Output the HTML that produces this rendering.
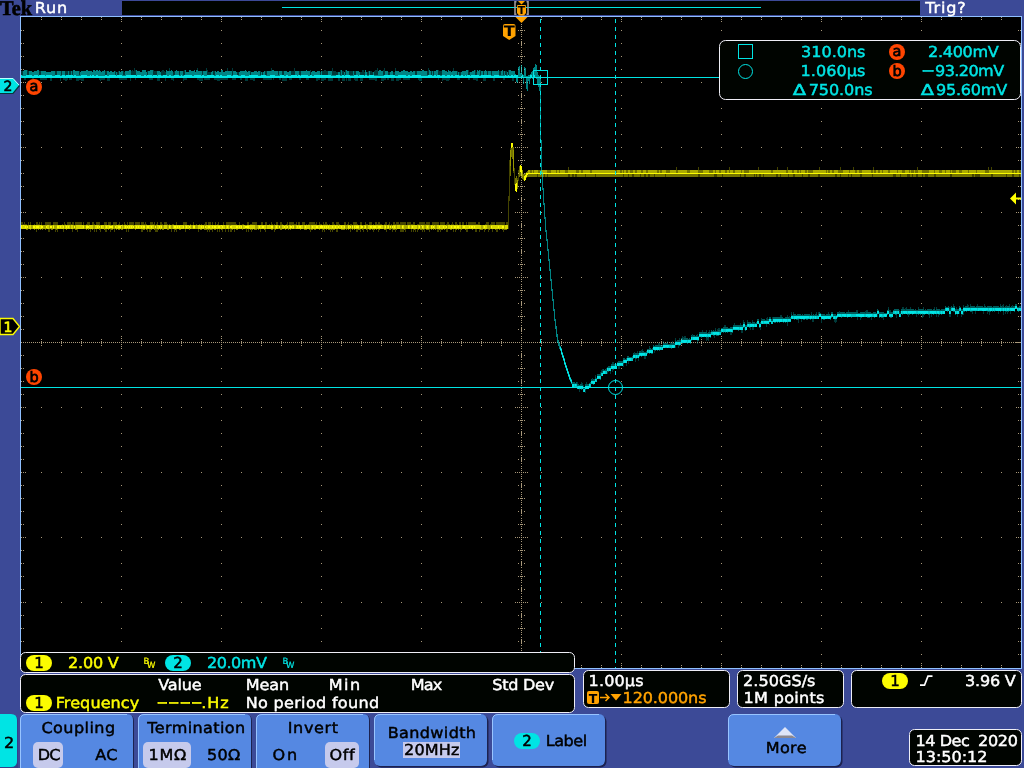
<!DOCTYPE html>
<html><head><meta charset="utf-8"><title>Tek Run</title>
<style>
html,body{margin:0;padding:0;background:#3c4a97;overflow:hidden}
svg{display:block;font-family:"DejaVu Sans","Liberation Sans",sans-serif;}
text{white-space:pre;text-rendering:geometricPrecision}
</style></head><body>
<svg width="1024" height="768" viewBox="0 0 1024 768" style="will-change:transform">
<rect x="0" y="0" width="1024" height="768" fill="#3c4a97" />
<rect x="20" y="16" width="1002" height="653" fill="#8fbfff" />
<rect x="21" y="17" width="1000" height="651" fill="#000" />
<rect x="122" y="1" width="798" height="14" fill="#000400" />
<rect x="282" y="7" width="479" height="1" fill="#00e4e4" />
<path d="M21 30h1M21 43h1M21 56h1M21 69h1M21 82h1M21 95h1M21 108h1M21 121h1M21 134h1M21 147h1M21 160h1M21 173h1M21 186h1M21 199h1M21 212h1M21 225h1M21 238h1M21 251h1M21 264h1M21 277h1M21 290h1M21 303h1M21 316h1M21 329h1M21 342h1M21 355h1M21 368h1M21 381h1M21 394h1M21 407h1M21 420h1M21 433h1M21 446h1M21 459h1M21 472h1M21 485h1M21 498h1M21 511h1M21 524h1M21 537h1M21 550h1M21 563h1M21 576h1M21 589h1M21 602h1M21 615h1M21 628h1M21 641h1M21 654h1M23 30h1M23 43h1M23 56h1M23 69h1M23 82h1M23 95h1M23 108h1M23 121h1M23 134h1M23 147h1M23 160h1M23 173h1M23 186h1M23 199h1M23 212h1M23 225h1M23 238h1M23 251h1M23 264h1M23 277h1M23 290h1M23 303h1M23 316h1M23 329h1M23 342h1M23 355h1M23 368h1M23 381h1M23 394h1M23 407h1M23 420h1M23 433h1M23 446h1M23 459h1M23 472h1M23 485h1M23 498h1M23 511h1M23 524h1M23 537h1M23 550h1M23 563h1M23 576h1M23 589h1M23 602h1M23 615h1M23 628h1M23 641h1M23 654h1M25 82h1M25 147h1M25 212h1M25 277h1M25 342h1M25 407h1M25 472h1M25 537h1M25 602h1M27 342h1M29 342h1M31 342h1M33 342h1M35 342h1M37 342h1M39 342h1M41 17h1M41 19h1M41 82h1M41 147h1M41 212h1M41 277h1M41 339h1M41 341h1M41 342h1M41 343h1M41 345h1M41 407h1M41 472h1M41 537h1M41 602h1M41 665h1M41 667h1M43 342h1M45 342h1M47 342h1M49 342h1M51 342h1M53 342h1M55 342h1M57 342h1M59 342h1M61 17h1M61 19h1M61 82h1M61 147h1M61 212h1M61 277h1M61 339h1M61 341h1M61 342h1M61 343h1M61 345h1M61 407h1M61 472h1M61 537h1M61 602h1M61 665h1M61 667h1M63 342h1M65 342h1M67 342h1M69 342h1M71 342h1M73 342h1M75 342h1M77 342h1M79 342h1M81 17h1M81 19h1M81 82h1M81 147h1M81 212h1M81 277h1M81 339h1M81 341h1M81 342h1M81 343h1M81 345h1M81 407h1M81 472h1M81 537h1M81 602h1M81 665h1M81 667h1M83 342h1M85 342h1M87 342h1M89 342h1M91 342h1M93 342h1M95 342h1M97 342h1M99 342h1M101 17h1M101 19h1M101 82h1M101 147h1M101 212h1M101 277h1M101 339h1M101 341h1M101 342h1M101 343h1M101 345h1M101 407h1M101 472h1M101 537h1M101 602h1M101 665h1M101 667h1M103 342h1M105 342h1M107 342h1M109 342h1M111 342h1M113 342h1M115 342h1M117 342h1M119 342h1M121 17h1M121 19h1M121 21h1M121 30h1M121 43h1M121 56h1M121 69h1M121 82h1M121 95h1M121 108h1M121 121h1M121 134h1M121 147h1M121 160h1M121 173h1M121 186h1M121 199h1M121 212h1M121 225h1M121 238h1M121 251h1M121 264h1M121 277h1M121 290h1M121 303h1M121 316h1M121 329h1M121 336h1M121 338h1M121 340h1M121 342h1M121 344h1M121 346h1M121 348h1M121 355h1M121 368h1M121 381h1M121 394h1M121 407h1M121 420h1M121 433h1M121 446h1M121 459h1M121 472h1M121 485h1M121 498h1M121 511h1M121 524h1M121 537h1M121 550h1M121 563h1M121 576h1M121 589h1M121 602h1M121 615h1M121 628h1M121 641h1M121 654h1M121 663h1M121 665h1M121 667h1M123 342h1M125 342h1M127 342h1M129 342h1M131 342h1M133 342h1M135 342h1M137 342h1M139 342h1M141 17h1M141 19h1M141 82h1M141 147h1M141 212h1M141 277h1M141 339h1M141 341h1M141 342h1M141 343h1M141 345h1M141 407h1M141 472h1M141 537h1M141 602h1M141 665h1M141 667h1M143 342h1M145 342h1M147 342h1M149 342h1M151 342h1M153 342h1M155 342h1M157 342h1M159 342h1M161 17h1M161 19h1M161 82h1M161 147h1M161 212h1M161 277h1M161 339h1M161 341h1M161 342h1M161 343h1M161 345h1M161 407h1M161 472h1M161 537h1M161 602h1M161 665h1M161 667h1M163 342h1M165 342h1M167 342h1M169 342h1M171 342h1M173 342h1M175 342h1M177 342h1M179 342h1M181 17h1M181 19h1M181 82h1M181 147h1M181 212h1M181 277h1M181 339h1M181 341h1M181 342h1M181 343h1M181 345h1M181 407h1M181 472h1M181 537h1M181 602h1M181 665h1M181 667h1M183 342h1M185 342h1M187 342h1M189 342h1M191 342h1M193 342h1M195 342h1M197 342h1M199 342h1M201 17h1M201 19h1M201 82h1M201 147h1M201 212h1M201 277h1M201 339h1M201 341h1M201 342h1M201 343h1M201 345h1M201 407h1M201 472h1M201 537h1M201 602h1M201 665h1M201 667h1M203 342h1M205 342h1M207 342h1M209 342h1M211 342h1M213 342h1M215 342h1M217 342h1M219 342h1M221 17h1M221 19h1M221 21h1M221 30h1M221 43h1M221 56h1M221 69h1M221 82h1M221 95h1M221 108h1M221 121h1M221 134h1M221 147h1M221 160h1M221 173h1M221 186h1M221 199h1M221 212h1M221 225h1M221 238h1M221 251h1M221 264h1M221 277h1M221 290h1M221 303h1M221 316h1M221 329h1M221 336h1M221 338h1M221 340h1M221 342h1M221 344h1M221 346h1M221 348h1M221 355h1M221 368h1M221 381h1M221 394h1M221 407h1M221 420h1M221 433h1M221 446h1M221 459h1M221 472h1M221 485h1M221 498h1M221 511h1M221 524h1M221 537h1M221 550h1M221 563h1M221 576h1M221 589h1M221 602h1M221 615h1M221 628h1M221 641h1M221 654h1M221 663h1M221 665h1M221 667h1M223 342h1M225 342h1M227 342h1M229 342h1M231 342h1M233 342h1M235 342h1M237 342h1M239 342h1M241 17h1M241 19h1M241 82h1M241 147h1M241 212h1M241 277h1M241 339h1M241 341h1M241 342h1M241 343h1M241 345h1M241 407h1M241 472h1M241 537h1M241 602h1M241 665h1M241 667h1M243 342h1M245 342h1M247 342h1M249 342h1M251 342h1M253 342h1M255 342h1M257 342h1M259 342h1M261 17h1M261 19h1M261 82h1M261 147h1M261 212h1M261 277h1M261 339h1M261 341h1M261 342h1M261 343h1M261 345h1M261 407h1M261 472h1M261 537h1M261 602h1M261 665h1M261 667h1M263 342h1M265 342h1M267 342h1M269 342h1M271 342h1M273 342h1M275 342h1M277 342h1M279 342h1M281 17h1M281 19h1M281 82h1M281 147h1M281 212h1M281 277h1M281 339h1M281 341h1M281 342h1M281 343h1M281 345h1M281 407h1M281 472h1M281 537h1M281 602h1M281 665h1M281 667h1M283 342h1M285 342h1M287 342h1M289 342h1M291 342h1M293 342h1M295 342h1M297 342h1M299 342h1M301 17h1M301 19h1M301 82h1M301 147h1M301 212h1M301 277h1M301 339h1M301 341h1M301 342h1M301 343h1M301 345h1M301 407h1M301 472h1M301 537h1M301 602h1M301 665h1M301 667h1M303 342h1M305 342h1M307 342h1M309 342h1M311 342h1M313 342h1M315 342h1M317 342h1M319 342h1M321 17h1M321 19h1M321 21h1M321 30h1M321 43h1M321 56h1M321 69h1M321 82h1M321 95h1M321 108h1M321 121h1M321 134h1M321 147h1M321 160h1M321 173h1M321 186h1M321 199h1M321 212h1M321 225h1M321 238h1M321 251h1M321 264h1M321 277h1M321 290h1M321 303h1M321 316h1M321 329h1M321 336h1M321 338h1M321 340h1M321 342h1M321 344h1M321 346h1M321 348h1M321 355h1M321 368h1M321 381h1M321 394h1M321 407h1M321 420h1M321 433h1M321 446h1M321 459h1M321 472h1M321 485h1M321 498h1M321 511h1M321 524h1M321 537h1M321 550h1M321 563h1M321 576h1M321 589h1M321 602h1M321 615h1M321 628h1M321 641h1M321 654h1M321 663h1M321 665h1M321 667h1M323 342h1M325 342h1M327 342h1M329 342h1M331 342h1M333 342h1M335 342h1M337 342h1M339 342h1M341 17h1M341 19h1M341 82h1M341 147h1M341 212h1M341 277h1M341 339h1M341 341h1M341 342h1M341 343h1M341 345h1M341 407h1M341 472h1M341 537h1M341 602h1M341 665h1M341 667h1M343 342h1M345 342h1M347 342h1M349 342h1M351 342h1M353 342h1M355 342h1M357 342h1M359 342h1M361 17h1M361 19h1M361 82h1M361 147h1M361 212h1M361 277h1M361 339h1M361 341h1M361 342h1M361 343h1M361 345h1M361 407h1M361 472h1M361 537h1M361 602h1M361 665h1M361 667h1M363 342h1M365 342h1M367 342h1M369 342h1M371 342h1M373 342h1M375 342h1M377 342h1M379 342h1M381 17h1M381 19h1M381 82h1M381 147h1M381 212h1M381 277h1M381 339h1M381 341h1M381 342h1M381 343h1M381 345h1M381 407h1M381 472h1M381 537h1M381 602h1M381 665h1M381 667h1M383 342h1M385 342h1M387 342h1M389 342h1M391 342h1M393 342h1M395 342h1M397 342h1M399 342h1M401 17h1M401 19h1M401 82h1M401 147h1M401 212h1M401 277h1M401 339h1M401 341h1M401 342h1M401 343h1M401 345h1M401 407h1M401 472h1M401 537h1M401 602h1M401 665h1M401 667h1M403 342h1M405 342h1M407 342h1M409 342h1M411 342h1M413 342h1M415 342h1M417 342h1M419 342h1M421 17h1M421 19h1M421 21h1M421 30h1M421 43h1M421 56h1M421 69h1M421 82h1M421 95h1M421 108h1M421 121h1M421 134h1M421 147h1M421 160h1M421 173h1M421 186h1M421 199h1M421 212h1M421 225h1M421 238h1M421 251h1M421 264h1M421 277h1M421 290h1M421 303h1M421 316h1M421 329h1M421 336h1M421 338h1M421 340h1M421 342h1M421 344h1M421 346h1M421 348h1M421 355h1M421 368h1M421 381h1M421 394h1M421 407h1M421 420h1M421 433h1M421 446h1M421 459h1M421 472h1M421 485h1M421 498h1M421 511h1M421 524h1M421 537h1M421 550h1M421 563h1M421 576h1M421 589h1M421 602h1M421 615h1M421 628h1M421 641h1M421 654h1M421 663h1M421 665h1M421 667h1M423 342h1M425 342h1M427 342h1M429 342h1M431 342h1M433 342h1M435 342h1M437 342h1M439 342h1M441 17h1M441 19h1M441 82h1M441 147h1M441 212h1M441 277h1M441 339h1M441 341h1M441 342h1M441 343h1M441 345h1M441 407h1M441 472h1M441 537h1M441 602h1M441 665h1M441 667h1M443 342h1M445 342h1M447 342h1M449 342h1M451 342h1M453 342h1M455 342h1M457 342h1M459 342h1M461 17h1M461 19h1M461 82h1M461 147h1M461 212h1M461 277h1M461 339h1M461 341h1M461 342h1M461 343h1M461 345h1M461 407h1M461 472h1M461 537h1M461 602h1M461 665h1M461 667h1M463 342h1M465 342h1M467 342h1M469 342h1M471 342h1M473 342h1M475 342h1M477 342h1M479 342h1M481 17h1M481 19h1M481 82h1M481 147h1M481 212h1M481 277h1M481 339h1M481 341h1M481 342h1M481 343h1M481 345h1M481 407h1M481 472h1M481 537h1M481 602h1M481 665h1M481 667h1M483 342h1M485 342h1M487 342h1M489 342h1M491 342h1M493 342h1M495 342h1M497 342h1M499 342h1M501 17h1M501 19h1M501 82h1M501 147h1M501 212h1M501 277h1M501 339h1M501 341h1M501 342h1M501 343h1M501 345h1M501 407h1M501 472h1M501 537h1M501 602h1M501 665h1M501 667h1M503 342h1M505 342h1M507 342h1M509 342h1M511 342h1M513 342h1M515 82h1M515 147h1M515 212h1M515 277h1M515 342h1M515 407h1M515 472h1M515 537h1M515 602h1M517 82h1M517 147h1M517 212h1M517 277h1M517 342h1M517 407h1M517 472h1M517 537h1M517 602h1M518 30h1M518 43h1M518 56h1M518 69h1M518 95h1M518 108h1M518 121h1M518 134h1M518 160h1M518 173h1M518 186h1M518 199h1M518 225h1M518 238h1M518 251h1M518 264h1M518 290h1M518 303h1M518 316h1M518 329h1M518 355h1M518 368h1M518 381h1M518 394h1M518 420h1M518 433h1M518 446h1M518 459h1M518 485h1M518 498h1M518 511h1M518 524h1M518 550h1M518 563h1M518 576h1M518 589h1M518 615h1M518 628h1M518 641h1M518 654h1M519 82h1M519 147h1M519 212h1M519 277h1M519 342h1M519 407h1M519 472h1M519 537h1M519 602h1M520 30h1M520 56h1M520 108h1M520 134h1M520 160h1M520 186h1M520 238h1M520 264h1M520 290h1M520 316h1M520 368h1M520 394h1M520 420h1M520 446h1M520 498h1M520 524h1M520 550h1M520 576h1M520 628h1M520 654h1M521 17h1M521 19h1M521 21h1M521 24h1M521 26h1M521 28h1M521 30h1M521 32h1M521 34h1M521 36h1M521 39h1M521 41h1M521 42h1M521 43h1M521 44h1M521 45h1M521 47h1M521 50h1M521 52h1M521 54h1M521 56h1M521 58h1M521 60h1M521 62h1M521 65h1M521 67h1M521 68h1M521 69h1M521 70h1M521 71h1M521 73h1M521 76h1M521 78h1M521 80h1M521 82h1M521 84h1M521 86h1M521 88h1M521 91h1M521 93h1M521 94h1M521 95h1M521 96h1M521 97h1M521 99h1M521 102h1M521 104h1M521 106h1M521 108h1M521 110h1M521 112h1M521 114h1M521 117h1M521 119h1M521 120h1M521 121h1M521 122h1M521 123h1M521 125h1M521 128h1M521 130h1M521 132h1M521 134h1M521 136h1M521 138h1M521 140h1M521 143h1M521 145h1M521 147h1M521 149h1M521 151h1M521 154h1M521 156h1M521 158h1M521 160h1M521 162h1M521 164h1M521 166h1M521 169h1M521 171h1M521 172h1M521 173h1M521 174h1M521 175h1M521 177h1M521 180h1M521 182h1M521 184h1M521 186h1M521 188h1M521 190h1M521 192h1M521 195h1M521 197h1M521 198h1M521 199h1M521 200h1M521 201h1M521 203h1M521 206h1M521 208h1M521 210h1M521 212h1M521 214h1M521 216h1M521 218h1M521 221h1M521 223h1M521 224h1M521 225h1M521 226h1M521 227h1M521 229h1M521 232h1M521 234h1M521 236h1M521 238h1M521 240h1M521 242h1M521 244h1M521 247h1M521 249h1M521 250h1M521 251h1M521 252h1M521 253h1M521 255h1M521 258h1M521 260h1M521 262h1M521 264h1M521 266h1M521 268h1M521 270h1M521 273h1M521 275h1M521 277h1M521 279h1M521 281h1M521 284h1M521 286h1M521 288h1M521 290h1M521 292h1M521 294h1M521 296h1M521 299h1M521 301h1M521 302h1M521 303h1M521 304h1M521 305h1M521 307h1M521 310h1M521 312h1M521 314h1M521 316h1M521 318h1M521 320h1M521 322h1M521 325h1M521 327h1M521 328h1M521 329h1M521 330h1M521 331h1M521 333h1M521 336h1M521 338h1M521 340h1M521 342h1M521 344h1M521 346h1M521 348h1M521 351h1M521 353h1M521 354h1M521 355h1M521 356h1M521 357h1M521 359h1M521 362h1M521 364h1M521 366h1M521 368h1M521 370h1M521 372h1M521 374h1M521 377h1M521 379h1M521 380h1M521 381h1M521 382h1M521 383h1M521 385h1M521 388h1M521 390h1M521 392h1M521 394h1M521 396h1M521 398h1M521 400h1M521 403h1M521 405h1M521 407h1M521 409h1M521 411h1M521 414h1M521 416h1M521 418h1M521 420h1M521 422h1M521 424h1M521 426h1M521 429h1M521 431h1M521 432h1M521 433h1M521 434h1M521 435h1M521 437h1M521 440h1M521 442h1M521 444h1M521 446h1M521 448h1M521 450h1M521 452h1M521 455h1M521 457h1M521 458h1M521 459h1M521 460h1M521 461h1M521 463h1M521 466h1M521 468h1M521 470h1M521 472h1M521 474h1M521 476h1M521 478h1M521 481h1M521 483h1M521 484h1M521 485h1M521 486h1M521 487h1M521 489h1M521 492h1M521 494h1M521 496h1M521 498h1M521 500h1M521 502h1M521 504h1M521 507h1M521 509h1M521 510h1M521 511h1M521 512h1M521 513h1M521 515h1M521 518h1M521 520h1M521 522h1M521 524h1M521 526h1M521 528h1M521 530h1M521 533h1M521 535h1M521 537h1M521 539h1M521 541h1M521 544h1M521 546h1M521 548h1M521 550h1M521 552h1M521 554h1M521 556h1M521 559h1M521 561h1M521 562h1M521 563h1M521 564h1M521 565h1M521 567h1M521 570h1M521 572h1M521 574h1M521 576h1M521 578h1M521 580h1M521 582h1M521 585h1M521 587h1M521 588h1M521 589h1M521 590h1M521 591h1M521 593h1M521 596h1M521 598h1M521 600h1M521 602h1M521 604h1M521 606h1M521 608h1M521 611h1M521 613h1M521 614h1M521 615h1M521 616h1M521 617h1M521 619h1M521 622h1M521 624h1M521 626h1M521 628h1M521 630h1M521 632h1M521 634h1M521 637h1M521 639h1M521 640h1M521 641h1M521 642h1M521 643h1M521 645h1M521 648h1M521 650h1M521 652h1M521 654h1M521 656h1M521 658h1M521 660h1M521 663h1M521 665h1M521 667h1M522 30h1M522 56h1M522 108h1M522 134h1M522 160h1M522 186h1M522 238h1M522 264h1M522 290h1M522 316h1M522 368h1M522 394h1M522 420h1M522 446h1M522 498h1M522 524h1M522 550h1M522 576h1M522 628h1M522 654h1M523 82h1M523 147h1M523 212h1M523 277h1M523 342h1M523 407h1M523 472h1M523 537h1M523 602h1M524 30h1M524 43h1M524 56h1M524 69h1M524 95h1M524 108h1M524 121h1M524 134h1M524 160h1M524 173h1M524 186h1M524 199h1M524 225h1M524 238h1M524 251h1M524 264h1M524 290h1M524 303h1M524 316h1M524 329h1M524 355h1M524 368h1M524 381h1M524 394h1M524 420h1M524 433h1M524 446h1M524 459h1M524 485h1M524 498h1M524 511h1M524 524h1M524 550h1M524 563h1M524 576h1M524 589h1M524 615h1M524 628h1M524 641h1M524 654h1M525 82h1M525 147h1M525 212h1M525 277h1M525 342h1M525 407h1M525 472h1M525 537h1M525 602h1M527 82h1M527 147h1M527 212h1M527 277h1M527 342h1M527 407h1M527 472h1M527 537h1M527 602h1M529 342h1M531 342h1M533 342h1M535 342h1M537 342h1M539 342h1M541 17h1M541 19h1M541 82h1M541 147h1M541 212h1M541 277h1M541 339h1M541 341h1M541 342h1M541 343h1M541 345h1M541 407h1M541 472h1M541 537h1M541 602h1M541 665h1M541 667h1M543 342h1M545 342h1M547 342h1M549 342h1M551 342h1M553 342h1M555 342h1M557 342h1M559 342h1M561 17h1M561 19h1M561 82h1M561 147h1M561 212h1M561 277h1M561 339h1M561 341h1M561 342h1M561 343h1M561 345h1M561 407h1M561 472h1M561 537h1M561 602h1M561 665h1M561 667h1M563 342h1M565 342h1M567 342h1M569 342h1M571 342h1M573 342h1M575 342h1M577 342h1M579 342h1M581 17h1M581 19h1M581 82h1M581 147h1M581 212h1M581 277h1M581 339h1M581 341h1M581 342h1M581 343h1M581 345h1M581 407h1M581 472h1M581 537h1M581 602h1M581 665h1M581 667h1M583 342h1M585 342h1M587 342h1M589 342h1M591 342h1M593 342h1M595 342h1M597 342h1M599 342h1M601 17h1M601 19h1M601 82h1M601 147h1M601 212h1M601 277h1M601 339h1M601 341h1M601 342h1M601 343h1M601 345h1M601 407h1M601 472h1M601 537h1M601 602h1M601 665h1M601 667h1M603 342h1M605 342h1M607 342h1M609 342h1M611 342h1M613 342h1M615 342h1M617 342h1M619 342h1M621 17h1M621 19h1M621 21h1M621 30h1M621 43h1M621 56h1M621 69h1M621 82h1M621 95h1M621 108h1M621 121h1M621 134h1M621 147h1M621 160h1M621 173h1M621 186h1M621 199h1M621 212h1M621 225h1M621 238h1M621 251h1M621 264h1M621 277h1M621 290h1M621 303h1M621 316h1M621 329h1M621 336h1M621 338h1M621 340h1M621 342h1M621 344h1M621 346h1M621 348h1M621 355h1M621 368h1M621 381h1M621 394h1M621 407h1M621 420h1M621 433h1M621 446h1M621 459h1M621 472h1M621 485h1M621 498h1M621 511h1M621 524h1M621 537h1M621 550h1M621 563h1M621 576h1M621 589h1M621 602h1M621 615h1M621 628h1M621 641h1M621 654h1M621 663h1M621 665h1M621 667h1M623 342h1M625 342h1M627 342h1M629 342h1M631 342h1M633 342h1M635 342h1M637 342h1M639 342h1M641 17h1M641 19h1M641 82h1M641 147h1M641 212h1M641 277h1M641 339h1M641 341h1M641 342h1M641 343h1M641 345h1M641 407h1M641 472h1M641 537h1M641 602h1M641 665h1M641 667h1M643 342h1M645 342h1M647 342h1M649 342h1M651 342h1M653 342h1M655 342h1M657 342h1M659 342h1M661 17h1M661 19h1M661 82h1M661 147h1M661 212h1M661 277h1M661 339h1M661 341h1M661 342h1M661 343h1M661 345h1M661 407h1M661 472h1M661 537h1M661 602h1M661 665h1M661 667h1M663 342h1M665 342h1M667 342h1M669 342h1M671 342h1M673 342h1M675 342h1M677 342h1M679 342h1M681 17h1M681 19h1M681 82h1M681 147h1M681 212h1M681 277h1M681 339h1M681 341h1M681 342h1M681 343h1M681 345h1M681 407h1M681 472h1M681 537h1M681 602h1M681 665h1M681 667h1M683 342h1M685 342h1M687 342h1M689 342h1M691 342h1M693 342h1M695 342h1M697 342h1M699 342h1M701 17h1M701 19h1M701 82h1M701 147h1M701 212h1M701 277h1M701 339h1M701 341h1M701 342h1M701 343h1M701 345h1M701 407h1M701 472h1M701 537h1M701 602h1M701 665h1M701 667h1M703 342h1M705 342h1M707 342h1M709 342h1M711 342h1M713 342h1M715 342h1M717 342h1M719 342h1M721 17h1M721 19h1M721 21h1M721 30h1M721 43h1M721 56h1M721 69h1M721 82h1M721 95h1M721 108h1M721 121h1M721 134h1M721 147h1M721 160h1M721 173h1M721 186h1M721 199h1M721 212h1M721 225h1M721 238h1M721 251h1M721 264h1M721 277h1M721 290h1M721 303h1M721 316h1M721 329h1M721 336h1M721 338h1M721 340h1M721 342h1M721 344h1M721 346h1M721 348h1M721 355h1M721 368h1M721 381h1M721 394h1M721 407h1M721 420h1M721 433h1M721 446h1M721 459h1M721 472h1M721 485h1M721 498h1M721 511h1M721 524h1M721 537h1M721 550h1M721 563h1M721 576h1M721 589h1M721 602h1M721 615h1M721 628h1M721 641h1M721 654h1M721 663h1M721 665h1M721 667h1M723 342h1M725 342h1M727 342h1M729 342h1M731 342h1M733 342h1M735 342h1M737 342h1M739 342h1M741 17h1M741 19h1M741 82h1M741 147h1M741 212h1M741 277h1M741 339h1M741 341h1M741 342h1M741 343h1M741 345h1M741 407h1M741 472h1M741 537h1M741 602h1M741 665h1M741 667h1M743 342h1M745 342h1M747 342h1M749 342h1M751 342h1M753 342h1M755 342h1M757 342h1M759 342h1M761 17h1M761 19h1M761 82h1M761 147h1M761 212h1M761 277h1M761 339h1M761 341h1M761 342h1M761 343h1M761 345h1M761 407h1M761 472h1M761 537h1M761 602h1M761 665h1M761 667h1M763 342h1M765 342h1M767 342h1M769 342h1M771 342h1M773 342h1M775 342h1M777 342h1M779 342h1M781 17h1M781 19h1M781 82h1M781 147h1M781 212h1M781 277h1M781 339h1M781 341h1M781 342h1M781 343h1M781 345h1M781 407h1M781 472h1M781 537h1M781 602h1M781 665h1M781 667h1M783 342h1M785 342h1M787 342h1M789 342h1M791 342h1M793 342h1M795 342h1M797 342h1M799 342h1M801 17h1M801 19h1M801 82h1M801 147h1M801 212h1M801 277h1M801 339h1M801 341h1M801 342h1M801 343h1M801 345h1M801 407h1M801 472h1M801 537h1M801 602h1M801 665h1M801 667h1M803 342h1M805 342h1M807 342h1M809 342h1M811 342h1M813 342h1M815 342h1M817 342h1M819 342h1M821 17h1M821 19h1M821 21h1M821 30h1M821 43h1M821 56h1M821 69h1M821 82h1M821 95h1M821 108h1M821 121h1M821 134h1M821 147h1M821 160h1M821 173h1M821 186h1M821 199h1M821 212h1M821 225h1M821 238h1M821 251h1M821 264h1M821 277h1M821 290h1M821 303h1M821 316h1M821 329h1M821 336h1M821 338h1M821 340h1M821 342h1M821 344h1M821 346h1M821 348h1M821 355h1M821 368h1M821 381h1M821 394h1M821 407h1M821 420h1M821 433h1M821 446h1M821 459h1M821 472h1M821 485h1M821 498h1M821 511h1M821 524h1M821 537h1M821 550h1M821 563h1M821 576h1M821 589h1M821 602h1M821 615h1M821 628h1M821 641h1M821 654h1M821 663h1M821 665h1M821 667h1M823 342h1M825 342h1M827 342h1M829 342h1M831 342h1M833 342h1M835 342h1M837 342h1M839 342h1M841 17h1M841 19h1M841 82h1M841 147h1M841 212h1M841 277h1M841 339h1M841 341h1M841 342h1M841 343h1M841 345h1M841 407h1M841 472h1M841 537h1M841 602h1M841 665h1M841 667h1M843 342h1M845 342h1M847 342h1M849 342h1M851 342h1M853 342h1M855 342h1M857 342h1M859 342h1M861 17h1M861 19h1M861 82h1M861 147h1M861 212h1M861 277h1M861 339h1M861 341h1M861 342h1M861 343h1M861 345h1M861 407h1M861 472h1M861 537h1M861 602h1M861 665h1M861 667h1M863 342h1M865 342h1M867 342h1M869 342h1M871 342h1M873 342h1M875 342h1M877 342h1M879 342h1M881 17h1M881 19h1M881 82h1M881 147h1M881 212h1M881 277h1M881 339h1M881 341h1M881 342h1M881 343h1M881 345h1M881 407h1M881 472h1M881 537h1M881 602h1M881 665h1M881 667h1M883 342h1M885 342h1M887 342h1M889 342h1M891 342h1M893 342h1M895 342h1M897 342h1M899 342h1M901 17h1M901 19h1M901 82h1M901 147h1M901 212h1M901 277h1M901 339h1M901 341h1M901 342h1M901 343h1M901 345h1M901 407h1M901 472h1M901 537h1M901 602h1M901 665h1M901 667h1M903 342h1M905 342h1M907 342h1M909 342h1M911 342h1M913 342h1M915 342h1M917 342h1M919 342h1M921 17h1M921 19h1M921 21h1M921 30h1M921 43h1M921 56h1M921 69h1M921 82h1M921 95h1M921 108h1M921 121h1M921 134h1M921 147h1M921 160h1M921 173h1M921 186h1M921 199h1M921 212h1M921 225h1M921 238h1M921 251h1M921 264h1M921 277h1M921 290h1M921 303h1M921 316h1M921 329h1M921 336h1M921 338h1M921 340h1M921 342h1M921 344h1M921 346h1M921 348h1M921 355h1M921 368h1M921 381h1M921 394h1M921 407h1M921 420h1M921 433h1M921 446h1M921 459h1M921 472h1M921 485h1M921 498h1M921 511h1M921 524h1M921 537h1M921 550h1M921 563h1M921 576h1M921 589h1M921 602h1M921 615h1M921 628h1M921 641h1M921 654h1M921 663h1M921 665h1M921 667h1M923 342h1M925 342h1M927 342h1M929 342h1M931 342h1M933 342h1M935 342h1M937 342h1M939 342h1M941 17h1M941 19h1M941 82h1M941 147h1M941 212h1M941 277h1M941 339h1M941 341h1M941 342h1M941 343h1M941 345h1M941 407h1M941 472h1M941 537h1M941 602h1M941 665h1M941 667h1M943 342h1M945 342h1M947 342h1M949 342h1M951 342h1M953 342h1M955 342h1M957 342h1M959 342h1M961 17h1M961 19h1M961 82h1M961 147h1M961 212h1M961 277h1M961 339h1M961 341h1M961 342h1M961 343h1M961 345h1M961 407h1M961 472h1M961 537h1M961 602h1M961 665h1M961 667h1M963 342h1M965 342h1M967 342h1M969 342h1M971 342h1M973 342h1M975 342h1M977 342h1M979 342h1M981 17h1M981 19h1M981 82h1M981 147h1M981 212h1M981 277h1M981 339h1M981 341h1M981 342h1M981 343h1M981 345h1M981 407h1M981 472h1M981 537h1M981 602h1M981 665h1M981 667h1M983 342h1M985 342h1M987 342h1M989 342h1M991 342h1M993 342h1M995 342h1M997 342h1M999 342h1M1001 17h1M1001 19h1M1001 82h1M1001 147h1M1001 212h1M1001 277h1M1001 339h1M1001 341h1M1001 342h1M1001 343h1M1001 345h1M1001 407h1M1001 472h1M1001 537h1M1001 602h1M1001 665h1M1001 667h1M1003 342h1M1005 342h1M1007 342h1M1009 342h1M1011 342h1M1013 342h1M1015 342h1M1016 82h1M1016 147h1M1016 212h1M1016 277h1M1016 342h1M1016 407h1M1016 472h1M1016 537h1M1016 602h1M1017 342h1M1018 30h1M1018 43h1M1018 56h1M1018 69h1M1018 82h1M1018 95h1M1018 108h1M1018 121h1M1018 134h1M1018 147h1M1018 160h1M1018 173h1M1018 186h1M1018 199h1M1018 212h1M1018 225h1M1018 238h1M1018 251h1M1018 264h1M1018 277h1M1018 290h1M1018 303h1M1018 316h1M1018 329h1M1018 342h1M1018 355h1M1018 368h1M1018 381h1M1018 394h1M1018 407h1M1018 420h1M1018 433h1M1018 446h1M1018 459h1M1018 472h1M1018 485h1M1018 498h1M1018 511h1M1018 524h1M1018 537h1M1018 550h1M1018 563h1M1018 576h1M1018 589h1M1018 602h1M1018 615h1M1018 628h1M1018 641h1M1018 654h1M1019 342h1M1020 30h1M1020 43h1M1020 56h1M1020 69h1M1020 82h1M1020 95h1M1020 108h1M1020 121h1M1020 134h1M1020 147h1M1020 160h1M1020 173h1M1020 186h1M1020 199h1M1020 212h1M1020 225h1M1020 238h1M1020 251h1M1020 264h1M1020 277h1M1020 290h1M1020 303h1M1020 316h1M1020 329h1M1020 342h1M1020 355h1M1020 368h1M1020 381h1M1020 394h1M1020 407h1M1020 420h1M1020 433h1M1020 446h1M1020 459h1M1020 472h1M1020 485h1M1020 498h1M1020 511h1M1020 524h1M1020 537h1M1020 550h1M1020 563h1M1020 576h1M1020 589h1M1020 602h1M1020 615h1M1020 628h1M1020 641h1M1020 654h1" stroke="#a8987a" stroke-width="1" transform="translate(0,0.5)" shape-rendering="crispEdges" fill="none"/>
<g shape-rendering="crispEdges" fill="none" transform="translate(0.5,0)" stroke="#fcfc00">
<path d="M21 222v3M22 222v3M23 224v1M24 222v3M25 224v1M26 224v1M28 222v3M30 222v3M34 224v1M36 222v3M36 229v3M37 222v3M38 224v1M39 222v3M41 222v3M45 222v3M46 222v3M47 222v3M48 222v3M48 229v3M49 222v3M49 229v3M50 222v3M53 222v3M54 222v3M55 222v3M55 229v3M56 222v3M57 222v3M57 229v3M62 224v1M63 229v3M64 222v3M65 224v1M67 222v3M68 222v3M69 222v3M70 222v3M71 224v1M72 222v3M72 229v3M73 222v3M75 222v3M76 222v3M77 222v3M77 229v3M78 222v3M79 222v3M80 222v3M81 222v3M83 222v3M86 224v1M87 222v3M88 222v3M89 222v3M90 229v3M92 222v3M93 222v3M94 224v1M94 229v3M96 222v3M96 229v3M97 222v3M98 222v3M99 222v3M100 229v3M104 222v3M105 222v3M105 229v3M106 222v3M106 229v3M108 222v3M109 222v3M110 222v3M110 229v3M113 222v3M114 222v3M114 229v3M115 222v3M116 222v3M118 224v1M119 222v3M122 224v1M124 222v3M125 224v1M126 229v3M127 222v3M128 229v3M129 222v3M130 222v3M131 222v3M132 222v3M133 222v3M135 222v3M136 222v3M137 222v3M138 222v3M139 222v3M141 222v3M141 229v3M142 222v3M142 229v3M143 222v3M144 224v1M145 222v3M146 224v1M147 229v3M149 229v3M150 222v3M150 229v3M151 222v3M152 222v3M153 224v1M154 222v3M155 229v3M156 224v1M156 229v3M157 222v3M157 229v3M160 222v3M161 222v3M162 224v1M164 222v3M165 222v3M166 222v3M167 224v1M169 224v1M171 229v3M172 224v1M173 224v1M174 229v3M176 222v3M176 229v3M183 222v3M184 222v3M185 222v3M185 229v3M186 222v3M190 224v1M193 222v3M196 224v1M198 229v3M199 224v1M201 224v1M204 224v1M205 222v3M206 222v3M207 229v3M208 222v3M209 222v3M209 229v3M210 222v3M212 222v3M212 229v3M215 222v3M217 224v1M217 229v3M218 222v3M219 229v3M222 229v3M223 222v3M225 229v3M226 222v3M227 222v3M228 222v3M228 229v3M229 222v3M230 222v3M230 229v3M231 222v3M231 229v3M232 222v3M233 222v3M234 222v3M234 229v3M235 222v3M236 224v1M239 222v3M242 224v1M243 224v1M246 229v3M247 222v3M248 222v3M248 229v3M250 224v1M251 224v1M251 229v3M252 222v3M253 222v3M254 222v3M255 222v3M256 222v3M260 229v3M261 222v3M262 222v3M265 222v3M265 229v3M266 222v3M269 224v1M271 222v3M272 224v1M274 224v1M274 229v3M276 222v3M277 222v3M280 222v3M281 222v3M282 224v1M286 224v1M287 222v3M289 222v3M290 222v3M291 222v3M292 222v3M293 222v3M294 224v1M295 224v1M296 222v3M298 222v3M299 222v3M302 222v3M303 222v3M304 222v3M306 224v1M308 224v1M309 222v3M310 222v3M310 229v3M311 222v3M312 222v3M313 222v3M314 222v3M315 224v1M316 222v3M319 222v3M320 224v1M321 224v1M322 229v3M323 222v3M324 224v1M324 229v3M325 222v3M326 222v3M327 224v1M329 224v1M330 229v3M332 222v3M332 229v3M333 222v3M334 224v1M336 222v3M336 229v3M337 222v3M337 229v3M338 222v3M339 224v1M344 222v3M345 222v3M347 224v1M348 222v3M350 224v1M350 229v3M351 224v1M353 222v3M354 222v3M355 222v3M356 222v3M356 229v3M357 224v1M357 229v3M360 222v3M360 229v3M361 222v3M363 229v3M365 222v3M366 224v1M367 224v1M367 229v3M369 222v3M370 222v3M371 222v3M373 224v1M373 229v3M375 222v3M376 222v3M377 224v1M378 222v3M378 229v3M379 222v3M380 224v1M381 224v1M384 224v1M385 222v3M386 222v3M386 229v3M388 224v1M389 222v3M391 224v1M392 229v3M393 222v3M394 222v3M395 224v1M395 229v3M396 222v3M397 222v3M398 222v3M399 224v1M400 222v3M400 229v3M401 222v3M401 229v3M402 222v3M402 229v3M403 222v3M403 229v3M404 222v3M405 222v3M405 229v3M407 222v3M408 222v3M409 222v3M410 222v3M411 224v1M411 229v3M412 224v1M413 222v3M413 229v3M414 222v3M415 229v3M417 224v1M417 229v3M418 224v1M419 222v3M420 222v3M421 222v3M422 222v3M422 229v3M423 222v3M424 222v3M424 229v3M425 224v1M426 222v3M427 222v3M428 222v3M429 222v3M429 229v3M432 222v3M433 222v3M434 222v3M435 222v3M436 222v3M437 222v3M437 229v3M438 222v3M438 229v3M440 222v3M440 229v3M441 222v3M442 222v3M443 222v3M444 222v3M446 224v1M446 229v3M447 222v3M447 229v3M448 222v3M449 224v1M451 224v1M452 222v3M453 224v1M453 229v3M455 222v3M455 229v3M456 222v3M457 224v1M459 222v3M460 222v3M460 229v3M462 222v3M463 222v3M466 222v3M466 229v3M467 229v3M468 222v3M469 222v3M470 222v3M471 222v3M472 222v3M473 222v3M474 222v3M475 222v3M475 229v3M476 224v1M476 229v3M477 224v1M478 222v3M479 222v3M479 229v3M484 229v3M485 224v1M486 222v3M487 222v3M488 222v3M488 229v3M490 224v1M491 222v3M492 222v3M492 229v3M493 222v3M494 222v3M496 222v3M496 229v3M497 222v3M497 229v3M498 222v3M499 222v3M500 222v3M501 222v3M502 222v3M503 222v3M503 229v3M504 222v3M506 222v3M507 222v3M537 174v3M544 174v3M547 174v3M568 174v3M568 167v3M569 174v3M572 174v3M573 174v3M575 174v3M576 174v3M585 174v3M595 174v3M623 174v3M628 174v3M632 174v3M633 174v3M640 174v3M644 174v3M645 174v3M648 174v3M649 174v3M654 174v3M665 174v3M676 167v3M698 174v3M698 167v3M699 174v3M714 174v3M715 174v3M716 174v3M722 174v3M729 167v3M740 174v3M744 174v3M745 174v3M754 174v3M756 174v3M758 167v3M759 174v3M760 174v3M763 174v3M776 174v3M777 174v3M777 167v3M780 174v3M787 167v3M788 174v3M793 174v3M794 174v3M802 174v3M808 174v3M809 174v3M818 174v3M819 174v3M819 167v3M835 174v3M836 174v3M840 174v3M840 167v3M848 174v3M851 174v3M853 167v3M860 174v3M861 174v3M872 174v3M873 167v3M893 174v3M894 174v3M895 174v3M900 174v3M907 174v3M908 174v3M909 174v3M912 174v3M916 174v3M917 174v3M917 167v3M922 174v3M925 174v3M926 174v3M927 174v3M934 174v3M935 174v3M950 174v3M951 174v3M972 174v3M973 174v3M975 174v3M976 174v3M977 174v3M978 174v3M979 174v3M988 167v3M991 174v3M991 167v3M992 174v3M1006 174v3M1012 174v3M1013 174v3M1019 174v3M508 196v33M509 160v41M510 148v18M513 150v23M514 168v17M517 178v9M518 170v11M522 170v7" stroke-opacity="0.27"/>
<path d="M26 229v1M27 229v1M30 229v1M34 229v1M38 229v1M40 229v1M42 229v1M45 229v1M51 229v1M52 229v1M56 229v1M66 229v1M75 229v1M76 229v1M86 229v1M88 229v1M92 229v1M99 229v1M104 229v1M108 229v1M111 229v1M112 229v1M116 229v1M118 229v1M119 229v1M121 229v1M122 229v1M135 229v1M143 229v1M144 229v1M146 229v1M151 229v1M154 229v1M158 229v1M160 229v1M162 229v1M163 229v1M167 229v1M168 229v1M175 229v1M179 229v1M180 229v1M189 229v1M200 229v1M201 229v1M204 229v1M205 229v1M206 229v1M208 229v1M210 229v1M211 229v1M214 229v1M215 229v1M221 229v1M232 229v1M236 229v1M237 229v1M242 229v1M250 229v1M252 229v1M254 229v1M255 229v1M256 229v1M258 229v1M264 229v1M271 229v1M272 229v1M275 229v1M280 229v1M281 229v1M285 229v1M288 229v1M290 229v1M300 229v1M304 229v1M305 229v1M306 229v1M309 229v1M311 229v1M312 229v1M314 229v1M315 229v1M319 229v1M323 229v1M326 229v1M328 229v1M329 229v1M331 229v1M333 229v1M334 229v1M341 229v1M342 229v1M343 229v1M344 229v1M346 229v1M348 229v1M352 229v1M354 229v1M358 229v1M359 229v1M362 229v1M366 229v1M369 229v1M370 229v1M372 229v1M374 229v1M376 229v1M379 229v1M384 229v1M385 229v1M389 229v1M390 229v1M393 229v1M394 229v1M396 229v1M404 229v1M414 229v1M418 229v1M420 229v1M421 229v1M423 229v1M426 229v1M427 229v1M428 229v1M431 229v1M433 229v1M435 229v1M439 229v1M441 229v1M442 229v1M444 229v1M450 229v1M451 229v1M456 229v1M458 229v1M461 229v1M465 229v1M472 229v1M480 229v1M481 229v1M482 229v1M485 229v1M489 229v1M495 229v1M499 229v1M502 229v1M504 229v1M505 229v1M506 229v1M528 174v3M529 174v3M530 170v3M530 174v3M531 170v3M531 174v3M532 174v3M533 170v3M533 174v3M534 174v3M535 174v3M536 174v3M538 170v3M538 174v3M539 170v3M539 174v3M540 170v3M540 174v3M541 174v3M542 174v3M543 174v3M545 174v3M546 174v3M547 170v3M548 170v3M548 174v3M549 170v3M549 174v3M550 170v3M550 174v3M551 174v3M552 174v3M553 174v3M554 174v3M555 174v3M556 170v3M556 174v3M557 174v3M558 174v3M559 170v3M559 174v3M560 174v3M561 174v3M562 174v3M563 174v3M564 174v3M565 170v3M565 174v3M566 170v3M566 174v3M567 170v3M567 174v3M570 174v3M571 174v3M574 174v3M576 170v3M577 170v3M577 174v3M578 170v3M578 174v3M579 174v3M580 174v3M581 170v3M581 174v3M582 170v3M582 174v3M583 174v3M584 174v3M586 174v3M587 174v3M588 174v3M589 174v3M590 170v3M590 174v3M591 170v3M591 174v3M592 174v3M593 174v3M594 174v3M596 174v3M597 174v3M598 174v3M599 174v3M600 174v3M601 174v3M602 174v3M603 174v3M604 174v3M605 174v3M606 174v3M607 174v3M608 174v3M609 174v3M610 174v3M611 174v3M612 174v3M613 174v3M614 174v3M615 170v3M615 174v3M616 170v3M616 174v3M617 174v3M618 174v3M619 174v3M620 170v3M620 174v3M621 170v3M621 174v3M622 174v3M623 170v3M624 174v3M625 174v3M626 170v3M626 174v3M627 170v3M627 174v3M629 174v3M630 170v3M630 174v3M631 170v3M631 174v3M632 170v3M634 174v3M635 170v3M635 174v3M636 170v3M636 174v3M637 174v3M638 174v3M639 174v3M641 170v3M641 174v3M642 170v3M642 174v3M643 174v3M646 170v3M646 174v3M647 170v3M647 174v3M650 174v3M651 174v3M652 174v3M653 174v3M655 174v3M656 174v3M657 170v3M657 174v3M658 170v3M658 174v3M659 174v3M660 170v3M660 174v3M661 170v3M661 174v3M662 174v3M663 174v3M664 174v3M666 170v3M666 174v3M667 170v3M667 174v3M668 170v3M668 174v3M669 170v3M669 174v3M670 174v3M671 174v3M672 174v3M673 174v3M674 174v3M675 174v3M676 170v3M676 174v3M677 170v3M677 174v3M678 174v3M679 174v3M680 174v3M681 174v3M682 174v3M683 174v3M684 174v3M685 174v3M686 174v3M687 170v3M687 174v3M688 170v3M688 174v3M689 170v3M689 174v3M690 174v3M691 174v3M692 174v3M693 174v3M694 174v3M695 174v3M696 174v3M697 174v3M698 170v3M699 170v3M700 170v3M700 174v3M701 170v3M701 174v3M702 170v3M702 174v3M703 174v3M704 174v3M705 174v3M706 174v3M707 174v3M708 174v3M709 170v3M709 174v3M710 170v3M710 174v3M711 170v3M711 174v3M712 170v3M712 174v3M713 174v3M715 170v3M717 174v3M718 174v3M719 170v3M719 174v3M720 170v3M720 174v3M721 174v3M723 174v3M724 174v3M725 170v3M725 174v3M726 170v3M726 174v3M727 174v3M728 174v3M729 170v3M729 174v3M730 174v3M731 174v3M732 174v3M733 170v3M733 174v3M734 170v3M734 174v3M735 174v3M736 174v3M737 174v3M738 174v3M739 174v3M741 170v3M741 174v3M742 174v3M743 174v3M744 170v3M745 170v3M746 170v3M746 174v3M747 170v3M747 174v3M748 170v3M748 174v3M749 174v3M750 174v3M751 174v3M752 174v3M753 174v3M755 174v3M757 174v3M758 174v3M761 174v3M762 174v3M764 174v3M765 174v3M766 174v3M767 174v3M768 174v3M769 174v3M770 174v3M771 170v3M771 174v3M772 170v3M772 174v3M773 174v3M774 174v3M775 174v3M778 174v3M779 174v3M781 174v3M782 174v3M783 174v3M784 174v3M785 174v3M786 170v3M786 174v3M787 170v3M787 174v3M789 174v3M790 174v3M791 174v3M792 170v3M792 174v3M793 170v3M795 174v3M796 174v3M797 170v3M797 174v3M798 170v3M798 174v3M799 174v3M800 170v3M800 174v3M801 174v3M803 174v3M804 174v3M805 170v3M805 174v3M806 170v3M806 174v3M807 174v3M808 170v3M809 170v3M810 170v3M810 174v3M811 170v3M811 174v3M812 170v3M812 174v3M813 174v3M814 174v3M815 174v3M816 174v3M817 174v3M820 174v3M821 174v3M822 174v3M823 174v3M824 174v3M825 174v3M826 170v3M826 174v3M827 174v3M828 170v3M828 174v3M829 170v3M829 174v3M830 174v3M831 174v3M832 170v3M832 174v3M833 170v3M833 174v3M834 174v3M837 174v3M838 170v3M838 174v3M839 170v3M839 174v3M840 170v3M841 170v3M841 174v3M842 170v3M842 174v3M843 174v3M844 174v3M845 174v3M846 174v3M847 174v3M849 170v3M849 174v3M850 174v3M852 174v3M853 174v3M854 174v3M855 170v3M855 174v3M856 170v3M856 174v3M857 174v3M858 174v3M859 170v3M859 174v3M860 170v3M861 170v3M862 174v3M863 174v3M864 174v3M865 174v3M866 174v3M867 174v3M868 174v3M869 174v3M870 174v3M871 170v3M871 174v3M872 170v3M873 174v3M874 170v3M874 174v3M875 170v3M875 174v3M876 174v3M877 174v3M878 170v3M878 174v3M879 170v3M879 174v3M880 174v3M881 174v3M882 170v3M882 174v3M883 174v3M884 174v3M885 174v3M886 174v3M887 174v3M888 170v3M888 174v3M889 170v3M889 174v3M890 174v3M891 174v3M892 174v3M896 174v3M897 170v3M897 174v3M898 174v3M899 174v3M901 174v3M902 170v3M902 174v3M903 170v3M903 174v3M904 170v3M904 174v3M905 174v3M906 174v3M909 170v3M910 174v3M911 170v3M911 174v3M912 170v3M913 170v3M913 174v3M914 174v3M915 170v3M915 174v3M916 170v3M917 170v3M918 174v3M919 174v3M920 174v3M921 174v3M922 170v3M923 170v3M923 174v3M924 170v3M924 174v3M925 170v3M926 170v3M927 170v3M928 170v3M928 174v3M929 174v3M930 174v3M931 174v3M932 174v3M933 174v3M934 170v3M936 174v3M937 174v3M938 174v3M939 170v3M939 174v3M940 170v3M940 174v3M941 170v3M941 174v3M942 174v3M943 174v3M944 174v3M945 170v3M945 174v3M946 174v3M947 174v3M948 174v3M949 174v3M950 170v3M952 170v3M952 174v3M953 170v3M953 174v3M954 170v3M954 174v3M955 170v3M955 174v3M956 174v3M957 174v3M958 174v3M959 170v3M959 174v3M960 170v3M960 174v3M961 170v3M961 174v3M962 174v3M963 174v3M964 174v3M965 174v3M966 174v3M967 174v3M968 170v3M968 174v3M969 174v3M970 174v3M971 174v3M974 174v3M976 170v3M980 174v3M981 174v3M982 174v3M983 174v3M984 174v3M985 170v3M985 174v3M986 170v3M986 174v3M987 170v3M987 174v3M988 170v3M988 174v3M989 174v3M990 174v3M993 174v3M994 174v3M995 174v3M996 174v3M997 174v3M998 174v3M999 174v3M1000 174v3M1001 174v3M1002 174v3M1003 174v3M1004 174v3M1005 174v3M1007 174v3M1008 174v3M1009 174v3M1010 174v3M1011 174v3M1012 170v3M1013 170v3M1014 174v3M1015 170v3M1015 174v3M1016 170v3M1016 174v3M1017 174v3M1018 174v3M1019 170v3M1020 170v3M1020 174v3M511 143v14M512 143v16M510 150v26M513 147v24M515 178v13M516 176v16M517 180v9M519 166v11M520 165v11M521 166v11M522 170v9M523 174v6M524 174v7M525 173v7M526 172v6M527 171v6" stroke-opacity="0.46"/>
<path d="M27 225v4M28 225v4M31 225v4M32 225v4M42 225v4M43 225v4M44 225v4M45 225v4M46 225v4M49 225v4M50 225v4M51 225v4M52 225v4M54 225v4M55 225v4M56 225v4M64 225v4M70 225v4M73 225v4M74 225v4M75 225v4M84 225v4M85 225v4M88 225v4M93 225v4M94 225v4M99 225v4M100 225v4M104 225v4M110 225v4M111 225v4M113 225v4M114 225v4M115 225v4M121 225v4M123 225v4M127 225v4M133 225v4M134 225v4M145 225v4M154 225v4M155 225v4M156 225v4M162 225v4M163 225v4M167 225v4M168 225v4M171 225v4M172 225v4M184 225v4M189 225v4M191 225v4M192 225v4M195 225v4M196 225v4M197 225v4M204 225v4M205 225v4M225 225v4M229 225v4M230 225v4M242 225v4M245 225v4M246 225v4M255 225v4M256 225v4M257 225v4M266 225v4M273 225v4M274 225v4M278 225v4M279 225v4M280 225v4M281 225v4M284 225v4M287 225v4M288 225v4M291 225v4M294 225v4M295 225v4M303 225v4M310 225v4M338 225v4M345 225v4M346 225v4M347 225v4M350 225v4M351 225v4M353 225v4M359 225v4M362 225v4M363 225v4M366 225v4M367 225v4M383 225v4M386 225v4M389 225v4M390 225v4M391 225v4M392 225v4M396 225v4M400 225v4M401 225v4M404 225v4M405 225v4M406 225v4M407 225v4M410 225v4M417 225v4M420 225v4M421 225v4M424 225v4M425 225v4M429 225v4M430 225v4M433 225v4M435 225v4M436 225v4M446 225v4M447 225v4M461 225v4M481 225v4M482 225v4M487 225v4M488 225v4M489 225v4M490 225v4M504 225v4M528 170v3M529 170v3M532 170v3M534 170v3M535 170v3M536 170v3M537 170v3M541 170v3M542 170v3M543 170v3M544 170v3M545 170v3M546 170v3M551 170v3M552 170v3M553 170v3M554 170v3M555 170v3M557 170v3M558 170v3M560 170v3M561 170v3M562 170v3M563 170v3M564 170v3M568 170v3M569 170v3M570 170v3M571 170v3M572 170v3M573 170v3M574 170v3M575 170v3M579 170v3M580 170v3M583 170v3M584 170v3M585 170v3M586 170v3M587 170v3M588 170v3M589 170v3M592 170v3M593 170v3M594 170v3M595 170v3M596 170v3M597 170v3M598 170v3M599 170v3M600 170v3M601 170v3M602 170v3M603 170v3M604 170v3M605 170v3M606 170v3M607 170v3M608 170v3M609 170v3M610 170v3M611 170v3M612 170v3M613 170v3M614 170v3M617 170v3M618 170v3M619 170v3M622 170v3M624 170v3M625 170v3M628 170v3M629 170v3M633 170v3M634 170v3M637 170v3M638 170v3M639 170v3M640 170v3M643 170v3M644 170v3M645 170v3M648 170v3M649 170v3M650 170v3M651 170v3M652 170v3M653 170v3M654 170v3M655 170v3M656 170v3M659 170v3M662 170v3M663 170v3M664 170v3M665 170v3M670 170v3M671 170v3M672 170v3M673 170v3M674 170v3M675 170v3M678 170v3M679 170v3M680 170v3M681 170v3M682 170v3M683 170v3M684 170v3M685 170v3M686 170v3M690 170v3M691 170v3M692 170v3M693 170v3M694 170v3M695 170v3M696 170v3M697 170v3M703 170v3M704 170v3M705 170v3M706 170v3M707 170v3M708 170v3M713 170v3M714 170v3M716 170v3M717 170v3M718 170v3M721 170v3M722 170v3M723 170v3M724 170v3M727 170v3M728 170v3M730 170v3M731 170v3M732 170v3M735 170v3M736 170v3M737 170v3M738 170v3M739 170v3M740 170v3M742 170v3M743 170v3M749 170v3M750 170v3M751 170v3M752 170v3M753 170v3M754 170v3M755 170v3M756 170v3M757 170v3M758 170v3M759 170v3M760 170v3M761 170v3M762 170v3M763 170v3M764 170v3M765 170v3M766 170v3M767 170v3M768 170v3M769 170v3M770 170v3M773 170v3M774 170v3M775 170v3M776 170v3M777 170v3M778 170v3M779 170v3M780 170v3M781 170v3M782 170v3M783 170v3M784 170v3M785 170v3M788 170v3M789 170v3M790 170v3M791 170v3M794 170v3M795 170v3M796 170v3M799 170v3M801 170v3M802 170v3M803 170v3M804 170v3M807 170v3M813 170v3M814 170v3M815 170v3M816 170v3M817 170v3M818 170v3M819 170v3M820 170v3M821 170v3M822 170v3M823 170v3M824 170v3M825 170v3M827 170v3M830 170v3M831 170v3M834 170v3M835 170v3M836 170v3M837 170v3M843 170v3M844 170v3M845 170v3M846 170v3M847 170v3M848 170v3M850 170v3M851 170v3M852 170v3M853 170v3M854 170v3M857 170v3M858 170v3M862 170v3M863 170v3M864 170v3M865 170v3M866 170v3M867 170v3M868 170v3M869 170v3M870 170v3M873 170v3M876 170v3M877 170v3M880 170v3M881 170v3M883 170v3M884 170v3M885 170v3M886 170v3M887 170v3M890 170v3M891 170v3M892 170v3M893 170v3M894 170v3M895 170v3M896 170v3M898 170v3M899 170v3M900 170v3M901 170v3M905 170v3M906 170v3M907 170v3M908 170v3M910 170v3M914 170v3M918 170v3M919 170v3M920 170v3M921 170v3M929 170v3M930 170v3M931 170v3M932 170v3M933 170v3M935 170v3M936 170v3M937 170v3M938 170v3M942 170v3M943 170v3M944 170v3M946 170v3M947 170v3M948 170v3M949 170v3M951 170v3M956 170v3M957 170v3M958 170v3M962 170v3M963 170v3M964 170v3M965 170v3M966 170v3M967 170v3M969 170v3M970 170v3M971 170v3M972 170v3M973 170v3M974 170v3M975 170v3M977 170v3M978 170v3M979 170v3M980 170v3M981 170v3M982 170v3M983 170v3M984 170v3M989 170v3M990 170v3M991 170v3M992 170v3M993 170v3M994 170v3M995 170v3M996 170v3M997 170v3M998 170v3M999 170v3M1000 170v3M1001 170v3M1002 170v3M1003 170v3M1004 170v3M1005 170v3M1006 170v3M1007 170v3M1008 170v3M1009 170v3M1010 170v3M1011 170v3M1014 170v3M1017 170v3M1018 170v3" stroke-opacity="0.68"/>
<path d="M21 225v4M22 225v4M23 225v4M24 225v4M25 225v4M26 225v4M29 225v4M30 225v4M33 225v4M34 225v4M35 225v4M36 225v4M37 225v4M38 225v4M39 225v4M40 225v4M41 225v4M47 225v4M48 225v4M53 225v4M57 225v4M58 225v4M59 225v4M60 225v4M61 225v4M62 225v4M63 225v4M65 225v4M66 225v4M67 225v4M68 225v4M69 225v4M71 225v4M72 225v4M76 225v4M77 225v4M78 225v4M79 225v4M80 225v4M81 225v4M82 225v4M83 225v4M86 225v4M87 225v4M89 225v4M90 225v4M91 225v4M92 225v4M95 225v4M96 225v4M97 225v4M98 225v4M101 225v4M102 225v4M103 225v4M105 225v4M106 225v4M107 225v4M108 225v4M109 225v4M112 225v4M116 225v4M117 225v4M118 225v4M119 225v4M120 225v4M122 225v4M124 225v4M125 225v4M126 225v4M128 225v4M129 225v4M130 225v4M131 225v4M132 225v4M135 225v4M136 225v4M137 225v4M138 225v4M139 225v4M140 225v4M141 225v4M142 225v4M143 225v4M144 225v4M146 225v4M147 225v4M148 225v4M149 225v4M150 225v4M151 225v4M152 225v4M153 225v4M157 225v4M158 225v4M159 225v4M160 225v4M161 225v4M164 225v4M165 225v4M166 225v4M169 225v4M170 225v4M173 225v4M174 225v4M175 225v4M176 225v4M177 225v4M178 225v4M179 225v4M180 225v4M181 225v4M182 225v4M183 225v4M185 225v4M186 225v4M187 225v4M188 225v4M190 225v4M193 225v4M194 225v4M198 225v4M199 225v4M200 225v4M201 225v4M202 225v4M203 225v4M206 225v4M207 225v4M208 225v4M209 225v4M210 225v4M211 225v4M212 225v4M213 225v4M214 225v4M215 225v4M216 225v4M217 225v4M218 225v4M219 225v4M220 225v4M221 225v4M222 225v4M223 225v4M224 225v4M226 225v4M227 225v4M228 225v4M231 225v4M232 225v4M233 225v4M234 225v4M235 225v4M236 225v4M237 225v4M238 225v4M239 225v4M240 225v4M241 225v4M243 225v4M244 225v4M247 225v4M248 225v4M249 225v4M250 225v4M251 225v4M252 225v4M253 225v4M254 225v4M258 225v4M259 225v4M260 225v4M261 225v4M262 225v4M263 225v4M264 225v4M265 225v4M267 225v4M268 225v4M269 225v4M270 225v4M271 225v4M272 225v4M275 225v4M276 225v4M277 225v4M282 225v4M283 225v4M285 225v4M286 225v4M289 225v4M290 225v4M292 225v4M293 225v4M296 225v4M297 225v4M298 225v4M299 225v4M300 225v4M301 225v4M302 225v4M304 225v4M305 225v4M306 225v4M307 225v4M308 225v4M309 225v4M311 225v4M312 225v4M313 225v4M314 225v4M315 225v4M316 225v4M317 225v4M318 225v4M319 225v4M320 225v4M321 225v4M322 225v4M323 225v4M324 225v4M325 225v4M326 225v4M327 225v4M328 225v4M329 225v4M330 225v4M331 225v4M332 225v4M333 225v4M334 225v4M335 225v4M336 225v4M337 225v4M339 225v4M340 225v4M341 225v4M342 225v4M343 225v4M344 225v4M348 225v4M349 225v4M352 225v4M354 225v4M355 225v4M356 225v4M357 225v4M358 225v4M360 225v4M361 225v4M364 225v4M365 225v4M368 225v4M369 225v4M370 225v4M371 225v4M372 225v4M373 225v4M374 225v4M375 225v4M376 225v4M377 225v4M378 225v4M379 225v4M380 225v4M381 225v4M382 225v4M384 225v4M385 225v4M387 225v4M388 225v4M393 225v4M394 225v4M395 225v4M397 225v4M398 225v4M399 225v4M402 225v4M403 225v4M408 225v4M409 225v4M411 225v4M412 225v4M413 225v4M414 225v4M415 225v4M416 225v4M418 225v4M419 225v4M422 225v4M423 225v4M426 225v4M427 225v4M428 225v4M431 225v4M432 225v4M434 225v4M437 225v4M438 225v4M439 225v4M440 225v4M441 225v4M442 225v4M443 225v4M444 225v4M445 225v4M448 225v4M449 225v4M450 225v4M451 225v4M452 225v4M453 225v4M454 225v4M455 225v4M456 225v4M457 225v4M458 225v4M459 225v4M460 225v4M462 225v4M463 225v4M464 225v4M465 225v4M466 225v4M467 225v4M468 225v4M469 225v4M470 225v4M471 225v4M472 225v4M473 225v4M474 225v4M475 225v4M476 225v4M477 225v4M478 225v4M479 225v4M480 225v4M483 225v4M484 225v4M485 225v4M486 225v4M491 225v4M492 225v4M493 225v4M494 225v4M495 225v4M496 225v4M497 225v4M498 225v4M499 225v4M500 225v4M501 225v4M502 225v4M503 225v4M505 225v4M506 225v4M507 225v4" stroke-opacity="0.86"/>
<path d="M21 226v2M25 226v2M27 226v2M33 226v2M34 226v2M36 226v2M37 226v2M38 226v2M41 226v2M42 226v2M46 226v2M50 226v2M51 226v2M53 226v2M57 226v2M58 226v2M60 226v2M63 226v2M66 226v2M68 226v2M74 226v2M83 226v2M86 226v2M87 226v2M88 226v2M97 226v2M99 226v2M101 226v2M106 226v2M109 226v2M110 226v2M111 226v2M112 226v2M115 226v2M118 226v2M119 226v2M120 226v2M125 226v2M127 226v2M129 226v2M131 226v2M133 226v2M136 226v2M138 226v2M141 226v2M143 226v2M144 226v2M147 226v2M148 226v2M151 226v2M155 226v2M159 226v2M161 226v2M169 226v2M174 226v2M175 226v2M177 226v2M179 226v2M183 226v2M186 226v2M189 226v2M193 226v2M194 226v2M201 226v2M203 226v2M205 226v2M208 226v2M209 226v2M212 226v2M214 226v2M215 226v2M218 226v2M219 226v2M222 226v2M227 226v2M230 226v2M231 226v2M236 226v2M237 226v2M239 226v2M241 226v2M245 226v2M246 226v2M247 226v2M248 226v2M259 226v2M262 226v2M263 226v2M271 226v2M272 226v2M276 226v2M279 226v2M284 226v2M287 226v2M290 226v2M291 226v2M293 226v2M297 226v2M299 226v2M300 226v2M305 226v2M312 226v2M316 226v2M317 226v2M320 226v2M321 226v2M322 226v2M324 226v2M326 226v2M328 226v2M332 226v2M335 226v2M338 226v2M341 226v2M344 226v2M348 226v2M350 226v2M352 226v2M354 226v2M356 226v2M357 226v2M358 226v2M361 226v2M362 226v2M365 226v2M370 226v2M371 226v2M373 226v2M374 226v2M375 226v2M378 226v2M379 226v2M380 226v2M385 226v2M388 226v2M390 226v2M392 226v2M394 226v2M402 226v2M408 226v2M412 226v2M419 226v2M422 226v2M427 226v2M431 226v2M433 226v2M439 226v2M443 226v2M446 226v2M451 226v2M454 226v2M455 226v2M457 226v2M458 226v2M463 226v2M464 226v2M469 226v2M471 226v2M472 226v2M474 226v2M484 226v2M491 226v2M498 226v2M502 226v2M503 226v2M528 173v1M529 173v1M530 173v1M531 173v1M532 173v1M533 173v1M534 173v1M535 173v1M536 173v1M537 173v1M538 173v1M539 173v1M540 173v1M541 173v1M542 173v1M543 173v1M544 173v1M545 173v1M546 173v1M547 173v1M548 173v1M549 173v1M550 173v1M551 173v1M552 173v1M553 173v1M554 173v1M555 173v1M556 173v1M557 173v1M558 173v1M559 173v1M560 173v1M561 173v1M562 173v1M563 173v1M564 173v1M565 173v1M566 173v1M567 173v1M568 173v1M569 173v1M570 173v1M571 173v1M572 173v1M573 173v1M574 173v1M575 173v1M576 173v1M577 173v1M578 173v1M579 173v1M580 173v1M581 173v1M582 173v1M583 173v1M584 173v1M585 173v1M586 173v1M587 173v1M588 173v1M589 173v1M590 173v1M591 173v1M592 173v1M593 173v1M594 173v1M595 173v1M596 173v1M597 173v1M598 173v1M599 173v1M600 173v1M601 173v1M602 173v1M603 173v1M604 173v1M605 173v1M606 173v1M607 173v1M608 173v1M609 173v1M610 173v1M611 173v1M612 173v1M613 173v1M614 173v1M615 173v1M616 173v1M617 173v1M618 173v1M619 173v1M620 173v1M621 173v1M622 173v1M623 173v1M624 173v1M625 173v1M626 173v1M627 173v1M628 173v1M629 173v1M630 173v1M631 173v1M632 173v1M633 173v1M634 173v1M635 173v1M636 173v1M637 173v1M638 173v1M639 173v1M640 173v1M641 173v1M642 173v1M643 173v1M644 173v1M645 173v1M646 173v1M647 173v1M648 173v1M649 173v1M650 173v1M651 173v1M652 173v1M653 173v1M654 173v1M655 173v1M656 173v1M657 173v1M658 173v1M659 173v1M660 173v1M661 173v1M662 173v1M663 173v1M664 173v1M665 173v1M666 173v1M667 173v1M668 173v1M669 173v1M670 173v1M671 173v1M672 173v1M673 173v1M674 173v1M675 173v1M676 173v1M677 173v1M678 173v1M679 173v1M680 173v1M681 173v1M682 173v1M683 173v1M684 173v1M685 173v1M686 173v1M687 173v1M688 173v1M689 173v1M690 173v1M691 173v1M692 173v1M693 173v1M694 173v1M695 173v1M696 173v1M697 173v1M698 173v1M699 173v1M700 173v1M701 173v1M702 173v1M703 173v1M704 173v1M705 173v1M706 173v1M707 173v1M708 173v1M709 173v1M710 173v1M711 173v1M712 173v1M713 173v1M714 173v1M715 173v1M716 173v1M717 173v1M718 173v1M719 173v1M720 173v1M721 173v1M722 173v1M723 173v1M724 173v1M725 173v1M726 173v1M727 173v1M728 173v1M729 173v1M730 173v1M731 173v1M732 173v1M733 173v1M734 173v1M735 173v1M736 173v1M737 173v1M738 173v1M739 173v1M740 173v1M741 173v1M742 173v1M743 173v1M744 173v1M745 173v1M746 173v1M747 173v1M748 173v1M749 173v1M750 173v1M751 173v1M752 173v1M753 173v1M754 173v1M755 173v1M756 173v1M757 173v1M758 173v1M759 173v1M760 173v1M761 173v1M762 173v1M763 173v1M764 173v1M765 173v1M766 173v1M767 173v1M768 173v1M769 173v1M770 173v1M771 173v1M772 173v1M773 173v1M774 173v1M775 173v1M776 173v1M777 173v1M778 173v1M779 173v1M780 173v1M781 173v1M782 173v1M783 173v1M784 173v1M785 173v1M786 173v1M787 173v1M788 173v1M789 173v1M790 173v1M791 173v1M792 173v1M793 173v1M794 173v1M795 173v1M796 173v1M797 173v1M798 173v1M799 173v1M800 173v1M801 173v1M802 173v1M803 173v1M804 173v1M805 173v1M806 173v1M807 173v1M808 173v1M809 173v1M810 173v1M811 173v1M812 173v1M813 173v1M814 173v1M815 173v1M816 173v1M817 173v1M818 173v1M819 173v1M820 173v1M821 173v1M822 173v1M823 173v1M824 173v1M825 173v1M826 173v1M827 173v1M828 173v1M829 173v1M830 173v1M831 173v1M832 173v1M833 173v1M834 173v1M835 173v1M836 173v1M837 173v1M838 173v1M839 173v1M840 173v1M841 173v1M842 173v1M843 173v1M844 173v1M845 173v1M846 173v1M847 173v1M848 173v1M849 173v1M850 173v1M851 173v1M852 173v1M853 173v1M854 173v1M855 173v1M856 173v1M857 173v1M858 173v1M859 173v1M860 173v1M861 173v1M862 173v1M863 173v1M864 173v1M865 173v1M866 173v1M867 173v1M868 173v1M869 173v1M870 173v1M871 173v1M872 173v1M873 173v1M874 173v1M875 173v1M876 173v1M877 173v1M878 173v1M879 173v1M880 173v1M881 173v1M882 173v1M883 173v1M884 173v1M885 173v1M886 173v1M887 173v1M888 173v1M889 173v1M890 173v1M891 173v1M892 173v1M893 173v1M894 173v1M895 173v1M896 173v1M897 173v1M898 173v1M899 173v1M900 173v1M901 173v1M902 173v1M903 173v1M904 173v1M905 173v1M906 173v1M907 173v1M908 173v1M909 173v1M910 173v1M911 173v1M912 173v1M913 173v1M914 173v1M915 173v1M916 173v1M917 173v1M918 173v1M919 173v1M920 173v1M921 173v1M922 173v1M923 173v1M924 173v1M925 173v1M926 173v1M927 173v1M928 173v1M929 173v1M930 173v1M931 173v1M932 173v1M933 173v1M934 173v1M935 173v1M936 173v1M937 173v1M938 173v1M939 173v1M940 173v1M941 173v1M942 173v1M943 173v1M944 173v1M945 173v1M946 173v1M947 173v1M948 173v1M949 173v1M950 173v1M951 173v1M952 173v1M953 173v1M954 173v1M955 173v1M956 173v1M957 173v1M958 173v1M959 173v1M960 173v1M961 173v1M962 173v1M963 173v1M964 173v1M965 173v1M966 173v1M967 173v1M968 173v1M969 173v1M970 173v1M971 173v1M972 173v1M973 173v1M974 173v1M975 173v1M976 173v1M977 173v1M978 173v1M979 173v1M980 173v1M981 173v1M982 173v1M983 173v1M984 173v1M985 173v1M986 173v1M987 173v1M988 173v1M989 173v1M990 173v1M991 173v1M992 173v1M993 173v1M994 173v1M995 173v1M996 173v1M997 173v1M998 173v1M999 173v1M1000 173v1M1001 173v1M1002 173v1M1003 173v1M1004 173v1M1005 173v1M1006 173v1M1007 173v1M1008 173v1M1009 173v1M1010 173v1M1011 173v1M1012 173v1M1013 173v1M1014 173v1M1015 173v1M1016 173v1M1017 173v1M1018 173v1M1019 173v1M1020 173v1M511 143v5M512 143v4M515 184v7M516 183v9M520 165v7M521 166v7M524 176v5M525 175v5M526 173v4M527 173v2" stroke-opacity="1"/>
</g>
<g shape-rendering="crispEdges" fill="none" transform="translate(0.5,0)" stroke="#00e4e4">
<path d="M21 71v4M22 71v4M24 78v2M25 78v2M27 70v5M28 71v4M32 78v3M33 78v3M39 71v4M40 71v4M40 78v2M41 78v2M42 78v2M43 78v2M44 78v2M45 78v2M46 78v2M50 78v3M51 78v3M55 71v4M56 71v4M60 78v3M61 71v4M63 78v2M64 78v2M65 71v4M65 78v3M66 71v4M66 78v3M67 71v4M67 78v2M69 71v4M69 78v2M70 71v4M70 78v2M71 78v2M72 71v4M76 78v3M77 78v3M78 78v3M79 71v4M79 78v2M80 78v2M81 78v3M82 78v3M83 78v3M99 78v2M100 78v3M101 78v2M102 78v2M103 78v2M104 78v2M105 71v4M106 71v4M107 78v3M108 78v3M109 78v3M115 71v4M117 72v3M118 71v4M119 78v2M120 78v2M121 78v2M122 78v2M123 71v4M123 78v2M124 72v3M124 78v2M125 78v2M126 78v2M130 78v3M131 71v4M132 70v5M133 71v4M134 71v4M134 68v3M135 70v5M135 78v2M147 71v4M149 78v2M150 78v2M151 78v2M152 78v2M153 70v5M154 71v4M155 71v4M156 71v4M157 78v3M158 78v3M159 78v3M161 71v4M162 70v5M163 70v5M164 71v4M165 72v3M165 78v3M169 68v3M171 78v2M172 78v2M173 72v3M173 78v3M174 71v4M179 71v4M183 71v4M183 78v3M184 70v5M184 78v2M185 78v2M186 78v2M197 78v2M197 68v2M198 78v2M199 78v3M200 78v3M201 78v3M202 71v4M202 78v3M204 78v2M205 78v2M206 78v2M206 68v3M207 70v5M207 78v2M208 72v3M208 78v2M209 72v3M209 78v2M210 72v3M213 71v4M214 71v4M214 78v2M215 78v2M216 78v2M217 78v3M218 78v3M219 78v3M220 78v2M221 78v2M222 78v2M223 78v2M224 78v2M225 78v2M226 78v2M227 78v2M227 68v3M232 71v4M232 78v2M232 68v3M233 78v2M234 78v2M235 78v2M237 72v3M238 72v3M240 78v2M241 78v2M245 78v3M246 78v3M247 78v3M250 71v4M250 78v2M251 78v2M252 78v2M253 78v3M254 78v3M260 71v4M262 72v3M263 78v2M264 78v2M265 71v4M265 78v2M266 71v4M266 78v2M267 78v2M268 78v2M269 78v2M270 78v2M271 78v2M271 68v3M273 78v2M278 71v4M279 78v2M280 78v2M282 71v4M282 78v3M283 71v4M283 78v3M284 78v3M285 78v3M286 78v3M289 78v2M290 78v2M291 71v4M291 78v2M292 71v4M293 71v4M294 70v5M294 68v2M299 71v4M299 78v2M300 71v4M300 78v2M306 78v2M307 78v2M308 78v2M310 70v5M316 78v3M317 78v3M318 78v2M319 78v2M320 72v3M321 78v3M322 71v4M322 78v3M323 71v4M323 78v3M324 70v5M324 78v2M325 70v5M325 78v2M326 71v4M327 71v4M328 78v3M329 78v3M330 78v3M331 78v3M332 71v4M332 78v3M332 68v3M333 71v4M334 71v4M335 71v4M336 72v3M337 72v3M338 78v3M339 78v3M340 70v5M342 71v4M342 78v3M343 71v4M343 78v3M344 78v3M345 70v5M346 78v3M348 78v3M349 71v4M349 78v3M350 71v4M350 78v3M351 71v4M352 71v4M354 71v4M354 78v2M355 71v4M355 78v3M356 78v3M357 78v3M360 72v3M360 78v3M361 72v3M361 78v3M362 70v5M362 78v3M363 70v5M364 72v3M367 72v3M368 71v4M369 78v2M370 71v4M370 78v2M371 71v4M371 78v2M372 72v3M372 78v2M373 78v2M374 71v4M374 78v2M375 70v5M375 78v3M376 70v5M376 78v3M377 72v3M377 68v4M381 78v3M382 78v3M383 70v5M383 78v3M384 70v5M384 78v2M384 68v2M385 78v2M387 78v2M388 72v3M388 78v2M389 72v3M391 78v3M392 78v3M393 72v3M393 78v3M394 72v3M395 68v3M396 78v3M397 78v3M398 78v3M399 78v2M400 78v2M403 78v2M404 78v2M405 78v2M406 78v2M407 78v2M408 78v2M409 78v2M415 71v4M416 71v4M418 78v2M419 78v3M420 78v3M421 78v3M427 71v4M428 71v4M428 68v3M431 71v4M433 71v4M438 70v5M438 78v2M439 71v4M440 71v4M441 71v4M442 78v3M443 78v2M444 78v2M445 78v2M446 78v3M447 78v3M448 78v3M449 78v2M453 68v3M457 71v4M457 78v2M458 78v2M459 72v3M459 78v2M460 72v3M468 70v5M468 78v2M469 72v3M469 78v2M473 78v2M474 78v2M475 70v5M475 78v2M476 72v3M476 78v3M477 78v3M480 70v5M483 71v4M483 78v3M484 78v3M485 78v3M487 71v4M491 71v4M493 78v3M494 78v3M499 71v4M500 71v4M503 71v4M503 78v2M504 78v2M505 71v4M506 71v4M508 70v5M512 78v3M513 78v3M577 382v2M579 389v3M581 382v2M582 383v2M583 385v2M585 390v3M586 382v2M592 378v2M595 375v2M600 372v2M601 370v2M602 369v2M606 368v2M607 371v3M610 371v3M612 362v2M612 369v3M613 362v2M618 366v3M619 366v3M623 364v3M626 363v3M628 361v3M634 352v2M635 359v3M637 351v2M638 358v3M641 350v2M642 349v2M644 356v3M645 356v3M649 346v2M654 350v3M658 343v2M659 343v2M663 341v2M667 341v2M670 342v2M672 341v2M675 338v2M675 345v3M678 345v3M679 338v2M682 336v2M683 337v2M684 336v2M685 336v2M692 334v2M697 334v2M697 341v3M702 330v2M706 330v2M706 338v3M707 337v3M708 338v3M709 330v2M714 335v3M715 328v2M717 329v2M718 328v2M719 328v2M724 325v2M725 325v2M730 332v3M731 332v3M734 323v2M740 323v2M741 330v3M742 330v3M743 320v2M744 327v3M747 320v2M750 327v3M752 320v2M752 327v3M753 327v3M760 327v3M761 318v2M766 318v2M766 324v3M767 317v2M769 322v3M772 317v2M780 315v2M781 315v2M787 315v2M787 323v3M789 316v2M791 312v2M793 312v2M798 320v3M801 319v3M811 312v2M812 319v3M813 319v3M816 312v2M818 312v2M821 320v3M828 312v2M834 319v3M835 320v3M836 319v3M839 311v2M848 310v2M856 310v2M857 310v2M857 317v3M860 317v3M865 311v2M866 310v2M867 310v2M871 317v3M877 314v3M883 317v3M888 307v2M889 310v2M890 310v2M896 315v3M899 310v2M900 311v2M902 307v2M903 307v2M905 308v2M906 307v2M908 314v3M910 307v2M916 314v3M918 307v2M922 315v3M923 307v2M923 314v3M929 315v3M931 314v3M934 307v2M936 307v2M936 314v3M938 314v3M949 307v2M949 314v3M950 307v2M950 314v3M953 304v2M956 307v2M957 314v3M959 311v3M961 314v3M963 305v2M963 312v3M967 304v2M968 305v2M970 304v2M972 311v3M975 311v3M977 304v2M983 311v3M984 304v2M987 311v3M989 312v3M998 311v3M1000 304v2M1002 305v2M1003 304v2M1003 312v3M1005 311v3M1006 305v2M1007 311v3M1009 304v2M1010 311v3M1012 305v2" stroke-opacity="0.25"/>
<path d="M22 75v1M23 75v1M23 71v4M24 75v1M24 70v5M25 75v1M25 70v5M26 70v5M29 71v4M30 71v4M31 71v4M32 75v1M32 72v3M33 75v1M33 72v3M34 71v4M35 71v4M36 71v4M37 70v5M38 75v1M38 70v5M41 71v4M42 71v4M43 71v4M44 71v4M45 75v1M45 71v4M46 72v3M47 72v3M48 72v3M49 72v3M50 72v3M51 71v4M52 75v1M52 71v4M53 75v1M53 71v4M54 75v1M54 71v4M57 71v4M58 71v4M59 71v4M60 75v1M60 71v4M61 75v1M62 71v4M63 71v4M64 71v4M65 75v1M68 71v4M71 71v4M73 75v1M73 70v5M74 70v5M75 71v4M76 75v1M76 71v4M77 75v1M77 71v4M78 75v1M78 71v4M79 75v1M80 75v1M80 72v3M81 71v4M82 71v4M83 71v4M84 71v4M85 71v4M86 70v5M87 75v1M87 70v5M88 75v1M88 71v4M89 75v1M89 71v4M90 71v4M91 75v1M91 71v4M92 72v3M93 70v5M94 75v1M94 70v5M95 75v1M95 71v4M96 70v5M97 70v5M98 75v1M98 71v4M99 75v1M99 70v5M100 75v1M100 71v4M101 75v1M101 72v3M102 75v1M102 71v4M103 75v1M103 71v4M104 75v1M104 70v5M107 75v1M107 71v4M108 75v1M108 71v4M109 72v3M110 71v4M111 71v4M112 72v3M113 72v3M114 71v4M116 75v1M116 72v3M119 71v4M120 72v3M121 71v4M122 75v1M122 71v4M123 75v1M124 75v1M125 75v1M125 71v4M126 71v4M127 71v4M128 71v4M129 70v5M130 70v5M136 75v1M136 70v5M137 71v4M138 71v4M139 71v4M140 72v3M141 75v1M141 72v3M142 75v1M142 70v5M143 75v1M143 70v5M144 70v5M145 70v5M146 75v1M146 72v3M148 71v4M149 71v4M150 70v5M151 70v5M152 75v1M152 70v5M157 75v1M157 71v4M158 71v4M159 71v4M160 72v3M161 75v1M162 75v1M166 70v5M167 75v1M167 71v4M168 75v1M168 71v4M169 71v4M170 71v4M171 75v1M171 70v5M172 75v1M172 71v4M173 75v1M175 71v4M176 70v5M177 71v4M178 71v4M179 75v1M180 75v1M180 71v4M181 71v4M182 75v1M182 71v4M183 75v1M185 70v5M186 72v3M187 72v3M188 72v3M189 70v5M190 70v5M191 71v4M192 75v1M192 71v4M193 75v1M193 71v4M194 70v5M195 72v3M196 70v5M197 70v5M198 71v4M199 71v4M200 71v4M201 75v1M201 71v4M203 71v4M204 75v1M204 71v4M205 75v1M205 71v4M206 75v1M206 71v4M211 72v3M212 71v4M214 75v1M215 75v1M215 71v4M216 72v3M217 71v4M218 71v4M219 75v1M219 72v3M220 72v3M221 70v5M222 75v1M222 70v5M223 75v1M223 72v3M224 75v1M224 72v3M225 75v1M225 71v4M226 75v1M226 71v4M227 71v4M228 71v4M229 71v4M230 71v4M231 75v1M231 71v4M232 75v1M233 71v4M234 71v4M235 71v4M236 72v3M238 75v1M239 75v1M239 72v3M240 75v1M240 71v4M241 71v4M242 71v4M243 71v4M244 71v4M245 75v1M245 70v5M246 75v1M246 71v4M247 75v1M247 72v3M248 75v1M248 71v4M249 71v4M251 72v3M252 72v3M253 72v3M254 71v4M255 71v4M256 71v4M257 72v3M258 75v1M258 71v4M259 75v1M259 71v4M260 75v1M261 72v3M263 72v3M264 71v4M266 75v1M267 75v1M267 71v4M268 75v1M268 71v4M269 75v1M269 71v4M270 71v4M271 71v4M272 70v5M273 70v5M274 71v4M275 75v1M275 71v4M276 75v1M276 71v4M277 75v1M277 71v4M278 75v1M279 75v1M279 71v4M280 71v4M281 71v4M284 75v1M284 71v4M285 75v1M285 71v4M286 71v4M287 72v3M288 75v1M288 72v3M289 75v1M289 71v4M290 75v1M290 71v4M295 71v4M296 71v4M297 75v1M297 71v4M298 71v4M300 75v1M301 71v4M302 71v4M303 71v4M304 71v4M305 71v4M306 70v5M307 71v4M308 75v1M308 71v4M309 75v1M309 71v4M311 72v3M312 75v1M312 71v4M313 75v1M313 71v4M314 71v4M315 72v3M316 72v3M317 71v4M318 71v4M319 71v4M321 71v4M328 71v4M329 71v4M330 71v4M331 75v1M331 71v4M332 75v1M333 75v1M334 75v1M335 75v1M338 72v3M339 72v3M340 75v1M341 75v1M341 70v5M344 75v1M344 72v3M346 70v5M347 71v4M348 71v4M350 75v1M351 75v1M352 75v1M353 75v1M353 71v4M356 71v4M357 71v4M358 75v1M358 71v4M359 72v3M364 75v1M365 70v5M366 72v3M367 75v1M368 75v1M369 71v4M373 72v3M374 75v1M375 75v1M376 75v1M377 75v1M378 75v1M378 71v4M379 75v1M379 70v5M380 75v1M380 70v5M381 75v1M381 71v4M382 75v1M382 71v4M383 75v1M385 71v4M386 71v4M387 71v4M390 72v3M391 71v4M392 71v4M395 75v1M395 71v4M396 75v1M396 71v4M397 75v1M397 71v4M398 71v4M399 72v3M400 72v3M401 71v4M402 71v4M403 70v5M404 70v5M405 71v4M406 75v1M406 71v4M407 75v1M407 71v4M408 72v3M409 72v3M410 75v1M410 71v4M411 75v1M411 71v4M412 72v3M413 71v4M414 71v4M417 71v4M418 71v4M419 71v4M420 71v4M421 75v1M421 71v4M422 75v1M422 70v5M423 75v1M423 70v5M424 75v1M424 71v4M425 75v1M425 71v4M426 75v1M426 71v4M427 75v1M429 70v5M430 71v4M432 75v1M432 71v4M433 75v1M434 71v4M435 71v4M436 75v1M436 70v5M437 70v5M440 75v1M441 75v1M442 70v5M443 70v5M444 70v5M445 75v1M445 71v4M446 75v1M446 71v4M447 72v3M448 70v5M449 71v4M450 75v1M450 71v4M451 72v3M452 71v4M453 75v1M453 71v4M454 75v1M454 71v4M455 71v4M456 71v4M458 72v3M459 75v1M460 75v1M461 72v3M462 71v4M463 75v1M463 71v4M464 75v1M464 71v4M465 71v4M466 75v1M466 70v5M467 70v5M470 75v1M470 72v3M471 72v3M472 71v4M473 71v4M474 70v5M477 70v5M478 71v4M479 75v1M479 70v5M480 75v1M481 71v4M482 71v4M484 71v4M485 70v5M486 71v4M488 71v4M489 71v4M490 71v4M491 75v1M492 75v1M492 71v4M493 75v1M493 71v4M494 71v4M495 71v4M496 71v4M497 71v4M498 70v5M499 75v1M500 75v1M501 75v1M501 71v4M502 75v1M502 70v5M503 75v1M504 75v1M504 71v4M506 75v1M507 75v1M507 72v3M509 75v1M509 70v5M510 75v1M510 70v5M511 71v4M512 71v4M513 75v1M513 71v4M514 71v4M515 74v4M516 76v6M517 75v8M518 67v10M519 66v12M520 73v4M521 65v14M522 74v4M523 75v9M524 67v10M525 68v10M526 76v13M527 76v15M528 75v6M529 75v9M530 74v5M531 72v6M532 71v8M533 68v9M534 67v11M535 64v13M536 65v14M537 72v12M538 75v12M539 76v15M540 76v66M541 140v34M542 172v18M543 188v17M544 203v16M545 217v15M546 230v11M547 239v12M548 249v12M549 259v12M550 269v12M551 279v12M552 289v12M553 299v12M554 309v12M555 319v10M556 326v11M557 334v9M558 340v6M559 343v6M560 346v5M561 348v7M562 352v6M563 355v6M564 358v7M565 362v6M566 365v6M567 368v6M568 371v6M569 374v6M570 377v5M571 379v5" stroke-opacity="0.58"/>
<path d="M572 382v6M573 382v5M574 382v6M575 383v5M576 382v5M577 384v5M578 384v5M579 385v4M580 384v5M581 384v6M582 385v4M583 387v5M584 387v5M585 384v6M586 384v5M587 384v5M588 384v5M589 383v4M590 382v5M591 379v5M592 380v4M593 379v6M594 379v5M595 377v5M596 378v4M597 374v5M598 374v5M599 374v5M600 374v6M601 372v4M602 371v5M603 369v5M604 370v4M605 369v5M606 370v4M607 367v4M608 366v6M609 366v5M610 366v5M611 364v5M612 364v5M613 364v6M614 364v5M615 364v5M616 364v5M617 362v4M618 361v5M619 361v5M620 361v5M621 361v5M622 361v5M623 358v6M624 358v5M625 359v4M626 358v5M627 356v5M628 356v5M629 357v4M630 357v4M631 357v4M632 356v5M633 353v6M634 354v4M635 353v6M636 353v6M637 353v5M638 353v5M639 351v6M640 351v5M641 352v5M642 351v5M643 351v5M644 352v4M645 352v4M646 351v5M647 349v5M648 349v4M649 348v6M650 348v5M651 349v5M652 348v6M653 345v5M654 346v4M655 345v6M656 345v5M657 345v6M658 345v5M659 345v6M660 345v5M661 345v5M662 345v5M663 343v5M664 343v5M665 343v5M666 343v5M667 343v5M668 344v4M669 344v4M670 344v4M671 343v6M672 343v5M673 343v5M674 343v5M675 340v5M676 341v4M677 340v5M678 340v5M679 340v6M680 340v5M681 338v5M682 338v6M683 339v4M684 338v5M685 338v5M686 338v5M687 338v6M688 339v4M689 338v5M690 339v5M691 335v6M692 336v4M693 335v5M694 335v5M695 336v4M696 335v5M697 336v5M698 336v5M699 332v5M700 332v5M701 332v6M702 332v5M703 332v5M704 332v5M705 332v5M706 332v6M707 333v4M708 332v6M709 332v5M710 332v6M711 330v5M712 331v4M713 330v6M714 331v4M715 330v5M716 331v5M717 331v5M718 330v6M719 330v5M720 330v5M721 328v5M722 328v4M723 327v6M724 327v5M725 327v6M726 327v5M727 327v6M728 328v4M729 328v4M730 327v5M731 327v5M732 327v6M733 325v5M734 325v5M735 325v5M736 325v5M737 325v5M738 325v6M739 325v5M740 325v5M741 325v5M742 325v5M743 322v6M744 322v5M745 325v6M746 325v5M747 322v5M748 322v5M749 322v6M750 322v5M751 323v4M752 322v5M753 322v5M754 322v5M755 323v4M756 322v5M757 319v5M758 319v5M759 323v5M760 322v5M761 320v4M762 319v5M763 319v5M764 319v5M765 320v4M766 320v4M767 319v5M768 319v5M769 317v5M770 317v5M771 319v5M772 319v5M773 317v5M774 317v6M775 317v6M776 317v5M777 317v6M778 317v5M779 317v6M780 317v5M781 317v5M782 317v5M783 318v5M784 318v4M785 317v6M786 317v5M787 317v6M788 317v5M789 318v4M790 317v5M791 314v5M792 315v4M793 314v5M794 314v6M795 314v5M796 315v5M797 314v6M798 314v6M799 314v5M800 314v5M801 315v4M802 314v5M803 315v5M804 314v6M805 314v5M806 314v6M807 314v6M808 314v5M809 314v5M810 315v5M811 314v5M812 315v4M813 314v5M814 315v4M815 314v5M816 314v5M817 315v4M818 314v5M819 312v5M820 313v4M821 314v6M822 314v5M823 314v6M824 314v6M825 315v4M826 314v5M827 314v5M828 314v5M829 314v5M830 315v5M831 312v6M832 312v5M833 314v5M834 314v5M835 314v6M836 315v4M837 312v6M838 312v5M839 313v4M840 312v5M841 312v6M842 312v5M843 312v5M844 312v5M845 313v4M846 312v5M847 312v6M848 312v5M849 312v5M850 312v5M851 312v6M852 312v5M853 312v5M854 312v5M855 312v5M856 312v5M857 312v5M858 313v4M859 313v4M860 312v5M861 312v6M862 312v5M863 312v5M864 312v5M865 313v4M866 312v5M867 312v6M868 312v6M869 312v6M870 312v5M871 313v4M872 313v4M873 312v5M874 312v6M875 312v5M876 313v4M877 309v5M878 310v4M879 312v6M880 312v5M881 312v6M882 312v6M883 312v5M884 313v4M885 313v4M886 313v4M887 310v5M888 309v5M889 312v5M890 312v6M891 312v6M892 312v5M893 310v4M894 309v5M895 309v6M896 309v6M897 309v5M898 309v5M899 312v5M900 313v4M901 309v5M902 309v6M903 309v5M904 309v5M905 310v4M906 309v5M907 309v6M908 309v5M909 309v6M910 309v5M911 309v5M912 309v6M913 309v5M914 310v4M915 309v5M916 310v4M917 310v4M918 309v6M919 309v5M920 309v6M921 309v5M922 309v6M923 309v5M924 310v5M925 309v5M926 310v4M927 309v5M928 309v6M929 309v6M930 309v5M931 309v5M932 310v4M933 309v6M934 309v5M935 310v4M936 309v5M937 309v5M938 309v5M939 309v6M940 310v4M941 309v6M942 309v5M943 309v5M944 309v5M945 306v5M946 307v4M947 307v5M948 306v5M949 309v5M950 309v5M951 306v5M952 307v4M953 306v6M954 306v6M955 309v6M956 309v5M957 309v5M958 309v5M959 306v5M960 307v4M961 309v5M962 309v6M963 307v5M964 307v5M965 306v5M966 306v6M967 306v5M968 307v4M969 307v4M970 306v6M971 306v6M972 306v5M973 306v5M974 306v5M975 307v4M976 306v5M977 306v5M978 306v5M979 306v5M980 306v5M981 306v5M982 306v5M983 307v4M984 306v5M985 306v5M986 307v4M987 306v5M988 306v6M989 306v6M990 306v6M991 306v5M992 307v5M993 306v5M994 306v6M995 306v5M996 306v5M997 306v5M998 306v5M999 307v4M1000 306v6M1001 306v5M1002 307v4M1003 306v6M1004 307v4M1005 306v5M1006 307v5M1007 306v5M1008 306v6M1009 306v5M1010 307v4M1011 306v5M1012 307v4M1013 306v5M1014 306v6M1015 304v5M1016 304v5M1017 307v4M1018 307v5M1019 306v5M1020 306v5" stroke-opacity="0.4"/>
<path d="M574 384v3M575 386v1M576 384v3M577 386v3M579 388v1M581 388v1M583 389v3M590 384v3M591 383v1M592 383v1M595 381v1M596 379v3M598 378v1M599 378v1M600 376v3M601 373v3M605 371v3M606 371v3M608 368v3M613 368v1M619 365v1M620 365v1M621 365v1M623 360v3M628 360v1M631 358v3M632 358v3M635 355v3M637 355v3M640 355v1M642 355v1M643 355v1M644 355v1M645 353v3M646 355v1M647 352v1M648 350v3M653 349v1M659 347v3M660 349v1M661 347v3M665 347v1M666 347v1M668 347v1M669 345v3M670 345v3M671 345v3M674 347v1M677 344v1M678 344v1M680 342v3M682 342v1M683 342v1M685 342v1M686 342v1M687 340v3M689 342v1M690 342v1M692 337v3M699 336v1M700 336v1M701 336v1M704 336v1M706 336v1M707 334v3M708 336v1M711 332v3M712 332v3M713 334v1M715 334v1M716 334v1M719 332v3M720 332v3M721 331v1M723 329v3M724 329v3M725 329v3M727 331v1M728 331v1M729 331v1M730 331v1M732 329v3M733 329v1M734 329v1M735 329v1M736 329v1M737 329v1M738 329v1M739 327v3M744 326v1M747 324v3M748 326v1M749 324v3M752 326v1M754 324v3M757 323v1M761 323v1M763 321v3M764 323v1M765 323v1M766 323v1M767 323v1M771 321v3M772 321v3M776 321v1M778 321v1M782 319v3M784 321v1M787 319v3M788 321v1M789 321v1M790 321v1M791 318v1M793 316v3M797 318v1M798 318v1M799 318v1M805 318v1M806 318v1M807 318v1M808 318v1M809 316v3M811 318v1M812 316v3M813 318v1M814 316v3M816 316v3M817 316v3M821 318v1M827 318v1M830 318v1M831 316v1M832 316v1M833 316v3M835 316v3M836 318v1M838 316v1M841 314v3M842 316v1M843 316v1M846 314v3M850 316v1M851 314v3M852 314v3M853 314v3M854 314v3M855 314v3M856 316v1M857 316v1M858 316v1M864 314v3M865 314v3M867 316v1M871 316v1M872 314v3M873 314v3M877 313v1M878 313v1M879 314v3M881 316v1M882 314v3M883 314v3M884 316v1M886 316v1M889 316v1M890 316v1M891 316v1M893 311v3M894 311v3M895 313v1M896 311v3M897 311v3M900 314v3M902 311v3M903 313v1M905 313v1M907 311v3M908 313v1M909 313v1M911 313v1M914 313v1M915 313v1M916 311v3M917 311v3M918 313v1M919 313v1M920 313v1M922 313v1M926 313v1M928 311v3M929 311v3M930 313v1M931 313v1M934 313v1M936 311v3M937 313v1M939 311v3M940 311v3M942 311v3M945 308v3M947 310v1M950 311v3M951 308v3M953 310v1M956 311v3M959 308v3M960 310v1M963 310v1M967 310v1M969 310v1M970 308v3M971 310v1M972 310v1M973 310v1M974 310v1M975 310v1M976 310v1M977 308v3M979 310v1M980 310v1M981 310v1M986 310v1M987 310v1M988 308v3M989 310v1M992 308v3M994 308v3M995 310v1M1001 308v3M1002 308v3M1004 308v3M1006 308v3M1008 310v1M1009 308v3M1010 310v1M1016 308v1M1017 310v1M1018 308v3M1019 310v1" stroke-opacity="0.78"/>
<path d="M21 75v2M22 76v1M23 76v1M24 76v1M25 76v1M26 75v2M27 75v2M28 75v2M29 75v2M30 75v2M31 75v2M32 76v1M33 76v1M34 75v2M35 75v2M36 75v2M37 75v2M38 76v1M39 75v2M40 75v2M41 75v2M42 75v2M43 75v2M44 75v2M45 76v1M46 75v2M47 75v2M48 75v2M49 75v2M50 75v2M51 75v2M52 76v1M53 76v1M54 76v1M55 75v2M56 75v2M57 75v2M58 75v2M59 75v2M60 76v1M61 76v1M62 75v2M63 75v2M64 75v2M65 76v1M66 75v2M67 75v2M68 75v2M69 75v2M70 75v2M71 75v2M72 75v2M73 76v1M74 75v2M75 75v2M76 76v1M77 76v1M78 76v1M79 76v1M80 76v1M81 75v2M82 75v2M83 75v2M84 75v2M85 75v2M86 75v2M87 76v1M88 76v1M89 76v1M90 75v2M91 76v1M92 75v2M93 75v2M94 76v1M95 76v1M96 75v2M97 75v2M98 76v1M99 76v1M100 76v1M101 76v1M102 76v1M103 76v1M104 76v1M105 75v2M106 75v2M107 76v1M108 76v1M109 75v2M110 75v2M111 75v2M112 75v2M113 75v2M114 75v2M115 75v2M116 76v1M117 75v2M118 75v2M119 75v2M120 75v2M121 75v2M122 76v1M123 76v1M124 76v1M125 76v1M126 75v2M127 75v2M128 75v2M129 75v2M130 75v2M131 75v2M132 75v2M133 75v2M134 75v2M135 75v2M136 76v1M137 75v2M138 75v2M139 75v2M140 75v2M141 76v1M142 76v1M143 76v1M144 75v2M145 75v2M146 76v1M147 75v2M148 75v2M149 75v2M150 75v2M151 75v2M152 76v1M153 75v2M154 75v2M155 75v2M156 75v2M157 76v1M158 75v2M159 75v2M160 75v2M161 76v1M162 76v1M163 75v2M164 75v2M165 75v2M166 75v2M167 76v1M168 76v1M169 75v2M170 75v2M171 76v1M172 76v1M173 76v1M174 75v2M175 75v2M176 75v2M177 75v2M178 75v2M179 76v1M180 76v1M181 75v2M182 76v1M183 76v1M184 75v2M185 75v2M186 75v2M187 75v2M188 75v2M189 75v2M190 75v2M191 75v2M192 76v1M193 76v1M194 75v2M195 75v2M196 75v2M197 75v2M198 75v2M199 75v2M200 75v2M201 76v1M202 75v2M203 75v2M204 76v1M205 76v1M206 76v1M207 75v2M208 75v2M209 75v2M210 75v2M211 75v2M212 75v2M213 75v2M214 76v1M215 76v1M216 75v2M217 75v2M218 75v2M219 76v1M220 75v2M221 75v2M222 76v1M223 76v1M224 76v1M225 76v1M226 76v1M227 75v2M228 75v2M229 75v2M230 75v2M231 76v1M232 76v1M233 75v2M234 75v2M235 75v2M236 75v2M237 75v2M238 76v1M239 76v1M240 76v1M241 75v2M242 75v2M243 75v2M244 75v2M245 76v1M246 76v1M247 76v1M248 76v1M249 75v2M250 75v2M251 75v2M252 75v2M253 75v2M254 75v2M255 75v2M256 75v2M257 75v2M258 76v1M259 76v1M260 76v1M261 75v2M262 75v2M263 75v2M264 75v2M265 75v2M266 76v1M267 76v1M268 76v1M269 76v1M270 75v2M271 75v2M272 75v2M273 75v2M274 75v2M275 76v1M276 76v1M277 76v1M278 76v1M279 76v1M280 75v2M281 75v2M282 75v2M283 75v2M284 76v1M285 76v1M286 75v2M287 75v2M288 76v1M289 76v1M290 76v1M291 75v2M292 75v2M293 75v2M294 75v2M295 75v2M296 75v2M297 76v1M298 75v2M299 75v2M300 76v1M301 75v2M302 75v2M303 75v2M304 75v2M305 75v2M306 75v2M307 75v2M308 76v1M309 76v1M310 75v2M311 75v2M312 76v1M313 76v1M314 75v2M315 75v2M316 75v2M317 75v2M318 75v2M319 75v2M320 75v2M321 75v2M322 75v2M323 75v2M324 75v2M325 75v2M326 75v2M327 75v2M328 75v2M329 75v2M330 75v2M331 76v1M332 76v1M333 76v1M334 76v1M335 76v1M336 75v2M337 75v2M338 75v2M339 75v2M340 76v1M341 76v1M342 75v2M343 75v2M344 76v1M345 75v2M346 75v2M347 75v2M348 75v2M349 75v2M350 76v1M351 76v1M352 76v1M353 76v1M354 75v2M355 75v2M356 75v2M357 75v2M358 76v1M359 75v2M360 75v2M361 75v2M362 75v2M363 75v2M364 76v1M365 75v2M366 75v2M367 76v1M368 76v1M369 75v2M370 75v2M371 75v2M372 75v2M373 75v2M374 76v1M375 76v1M376 76v1M377 76v1M378 76v1M379 76v1M380 76v1M381 76v1M382 76v1M383 76v1M384 75v2M385 75v2M386 75v2M387 75v2M388 75v2M389 75v2M390 75v2M391 75v2M392 75v2M393 75v2M394 75v2M395 76v1M396 76v1M397 76v1M398 75v2M399 75v2M400 75v2M401 75v2M402 75v2M403 75v2M404 75v2M405 75v2M406 76v1M407 76v1M408 75v2M409 75v2M410 76v1M411 76v1M412 75v2M413 75v2M414 75v2M415 75v2M416 75v2M417 75v2M418 75v2M419 75v2M420 75v2M421 76v1M422 76v1M423 76v1M424 76v1M425 76v1M426 76v1M427 76v1M428 75v2M429 75v2M430 75v2M431 75v2M432 76v1M433 76v1M434 75v2M435 75v2M436 76v1M437 75v2M438 75v2M439 75v2M440 76v1M441 76v1M442 75v2M443 75v2M444 75v2M445 76v1M446 76v1M447 75v2M448 75v2M449 75v2M450 76v1M451 75v2M452 75v2M453 76v1M454 76v1M455 75v2M456 75v2M457 75v2M458 75v2M459 76v1M460 76v1M461 75v2M462 75v2M463 76v1M464 76v1M465 75v2M466 76v1M467 75v2M468 75v2M469 75v2M470 76v1M471 75v2M472 75v2M473 75v2M474 75v2M475 75v2M476 75v2M477 75v2M478 75v2M479 76v1M480 76v1M481 75v2M482 75v2M483 75v2M484 75v2M485 75v2M486 75v2M487 75v2M488 75v2M489 75v2M490 75v2M491 76v1M492 76v1M493 76v1M494 75v2M495 75v2M496 75v2M497 75v2M498 75v2M499 76v1M500 76v1M501 76v1M502 76v1M503 76v1M504 76v1M505 75v2M506 76v1M507 76v1M508 75v2M509 76v1M510 76v1M511 75v2M512 75v2M513 76v1M514 75v2M515 75v2M516 75v2M517 75v2M522 75v2M530 75v2M531 75v2M533 75v2M534 75v2M560 347v3M561 349v5M562 353v4M563 356v4M564 359v5M565 363v4M566 366v4M567 369v4M568 372v4M569 375v4M570 378v3M571 380v3M572 384v3M573 384v3M575 384v2M578 386v3M579 386v2M580 386v3M581 386v2M582 386v3M584 389v3M585 386v3M586 386v3M587 386v3M588 386v3M589 384v3M591 381v2M592 381v2M593 381v3M594 381v3M595 379v2M597 376v3M598 376v2M599 376v2M602 373v3M603 371v3M604 371v3M607 368v3M609 368v3M610 368v3M611 366v3M612 366v3M613 366v2M614 366v3M615 366v3M616 366v3M617 363v3M618 363v3M619 363v2M620 363v2M621 363v2M622 363v3M624 360v3M625 360v3M626 360v3M627 358v3M628 358v2M629 358v3M630 358v3M633 355v3M634 355v3M636 355v3M638 355v3M639 353v3M640 353v2M641 353v3M642 353v2M643 353v2M644 353v2M646 353v2M647 350v2M649 350v3M650 350v3M651 350v3M652 350v3M653 347v2M654 347v3M655 347v3M656 347v3M657 347v3M658 347v3M660 347v2M662 347v3M663 345v3M664 345v3M665 345v2M666 345v2M667 345v3M668 345v2M672 345v3M673 345v3M674 345v2M675 342v3M676 342v3M677 342v2M678 342v2M679 342v3M681 340v3M682 340v2M683 340v2M684 340v3M685 340v2M686 340v2M688 340v3M689 340v2M690 340v2M691 337v3M693 337v3M694 337v3M695 337v3M696 337v3M697 337v3M698 337v3M699 334v2M700 334v2M701 334v2M702 334v3M703 334v3M704 334v2M705 334v3M706 334v2M708 334v2M709 334v3M710 334v3M713 332v2M714 332v3M715 332v2M716 332v2M717 332v3M718 332v3M721 329v2M722 329v3M726 329v3M727 329v2M728 329v2M729 329v2M730 329v2M731 329v3M733 327v2M734 327v2M735 327v2M736 327v2M737 327v2M738 327v2M740 327v3M741 327v3M742 327v3M743 324v3M744 324v2M745 327v3M746 327v3M748 324v2M750 324v3M751 324v3M752 324v2M753 324v3M755 324v3M756 324v3M757 321v2M758 321v3M759 324v3M760 324v3M761 321v2M762 321v3M764 321v2M765 321v2M766 321v2M767 321v2M768 321v3M769 319v3M770 319v3M773 319v3M774 319v3M775 319v3M776 319v2M777 319v3M778 319v2M779 319v3M780 319v3M781 319v3M783 319v3M784 319v2M785 319v3M786 319v3M788 319v2M789 319v2M790 319v2M791 316v2M792 316v3M794 316v3M795 316v3M796 316v3M797 316v2M798 316v2M799 316v2M800 316v3M801 316v3M802 316v3M803 316v3M804 316v3M805 316v2M806 316v2M807 316v2M808 316v2M810 316v3M811 316v2M813 316v2M815 316v3M818 316v3M819 314v3M820 314v3M821 316v2M822 316v3M823 316v3M824 316v3M825 316v3M826 316v3M827 316v2M828 316v3M829 316v3M830 316v2M831 314v2M832 314v2M834 316v3M836 316v2M837 314v3M838 314v2M839 314v3M840 314v3M842 314v2M843 314v2M844 314v3M845 314v3M847 314v3M848 314v3M849 314v3M850 314v2M856 314v2M857 314v2M858 314v2M859 314v3M860 314v3M861 314v3M862 314v3M863 314v3M866 314v3M867 314v2M868 314v3M869 314v3M870 314v3M871 314v2M874 314v3M875 314v3M876 314v3M877 311v2M878 311v2M880 314v3M881 314v2M884 314v2M885 314v3M886 314v2M887 311v3M888 311v3M889 314v2M890 314v2M891 314v2M892 314v3M895 311v2M898 311v3M899 314v3M901 311v3M903 311v2M904 311v3M905 311v2M906 311v3M908 311v2M909 311v2M910 311v3M911 311v2M912 311v3M913 311v3M914 311v2M915 311v2M918 311v2M919 311v2M920 311v2M921 311v3M922 311v2M923 311v3M924 311v3M925 311v3M926 311v2M927 311v3M930 311v2M931 311v2M932 311v3M933 311v3M934 311v2M935 311v3M937 311v2M938 311v3M941 311v3M943 311v3M944 311v3M946 308v3M947 308v2M948 308v3M949 311v3M952 308v3M953 308v2M954 308v3M955 311v3M957 311v3M958 311v3M960 308v2M961 311v3M962 311v3M963 308v2M964 308v3M965 308v3M966 308v3M967 308v2M968 308v3M969 308v2M971 308v2M972 308v2M973 308v2M974 308v2M975 308v2M976 308v2M978 308v3M979 308v2M980 308v2M981 308v2M982 308v3M983 308v3M984 308v3M985 308v3M986 308v2M987 308v2M989 308v2M990 308v3M991 308v3M993 308v3M995 308v2M996 308v3M997 308v3M998 308v3M999 308v3M1000 308v3M1003 308v3M1005 308v3M1007 308v3M1008 308v2M1010 308v2M1011 308v3M1012 308v3M1013 308v3M1014 308v3M1015 306v3M1016 306v2M1017 308v2M1019 308v2M1020 308v3" stroke-opacity="1"/>
</g>
<g shape-rendering="crispEdges" fill="none" stroke="#00e4e4">
<path d="M21 77.5H720M21 387.5H1021"/>
<path d="M540.5 19V668M615.5 19V668" stroke-dasharray="4 4"/>
<rect x="533.5" y="70.5" width="14" height="14"/>
</g>
<circle cx="615.5" cy="387.5" r="7" fill="none" stroke="#00e4e4"/>
<circle cx="34" cy="87" r="8" fill="#ff4500"/>
<text x="34" y="91.3" fill="#000" font-size="14.5" text-anchor="middle" stroke="#000" stroke-width="0.7" >a</text>
<circle cx="34" cy="377" r="8" fill="#ff4500"/>
<text x="34" y="382" fill="#000" font-size="14.5" text-anchor="middle" stroke="#000" stroke-width="0.7" >b</text>
<path d="M0 78H13L19.5 85.5L13 93.5H0Z" fill="#00e4e4"/>
<path d="M0 93.5H13L19.5 85.5" fill="none" stroke="#06383c" stroke-width="1.2"/>
<path d="M0 78.5H13L19 85" fill="none" stroke="#b8ffff" stroke-width="1"/>
<text x="8" y="91" fill="#000" font-size="14" text-anchor="middle" stroke="#000" stroke-width="0.6" >2</text>
<path d="M0 318.5H13L19.5 326.5L13 334.5H0Z" fill="#000" stroke="#fcfc00" stroke-width="1.4"/>
<text x="8" y="332" fill="#fcfc00" font-size="14" text-anchor="middle" stroke="#fcfc00" stroke-width="0.6" >1</text>
<path d="M1010 198.5L1016 192.5V197.5H1021V199.5H1016V204.5Z" fill="#ffff00"/>
<path d="M516.5 1.8H515V14.2H516.5M526.5 1.8H528V14.2H526.5" fill="none" stroke="#a09898" stroke-width="1.6"/>
<path d="M518 1H525L521.5 4.5Z" fill="#ffa200"/>
<path d="M517 6Q517 5 518 5H525Q526 5 526 6V13L524 15.5H519L517 13Z" fill="#ffa200"/>
<text x="521.5" y="14.2" fill="#000" font-size="11" text-anchor="middle" font-weight="bold" >T</text>
<path d="M515.5 17H527.5L521.5 23Z" fill="#ffa200"/>
<path d="M503 26Q503 24 505 24H513.5Q515.5 24 515.5 26V36L509.2 40L503 36Z" fill="#ffa200"/>
<text transform="translate(509.2,35.8) scale(1.12,1)" text-anchor="middle" font-size="14.5" font-weight="bold" fill="#000">T</text>
<rect x="719.5" y="40.5" width="301" height="59" rx="6" fill="#000400" stroke="#eeeef6"/>
<rect x="738.5" y="44.5" width="14" height="14" fill="none" stroke="#00e4e4" shape-rendering="crispEdges"/>
<circle cx="745.5" cy="71.5" r="7" fill="none" stroke="#00e4e4"/>
<text transform="translate(801.12,57) scale(1.07,1)" fill="#00e4e4" font-size="15" letter-spacing="-0.030" stroke="#00e4e4" stroke-width="0.45">310.0ns</text>
<text transform="translate(800.59,76) scale(1.07,1)" fill="#00e4e4" font-size="15" letter-spacing="0.053" stroke="#00e4e4" stroke-width="0.45">1.060μs</text>
<text transform="translate(0,95) scale(1.07,1)" fill="#00e4e4" font-size="15" stroke="#00e4e4" stroke-width="0.45"><tspan x="740.96" dy="0" textLength="12.48" lengthAdjust="spacingAndGlyphs">Δ</tspan><tspan x="755.81" dy="0" letter-spacing="-0.076">750.0ns</tspan></text>
<text transform="translate(928.12,57) scale(1.07,1)" fill="#00e4e4" font-size="15" letter-spacing="-0.290" stroke="#00e4e4" stroke-width="0.45">2.400mV</text>
<text transform="translate(0,76) scale(1.07,1)" fill="#00e4e4" font-size="15" stroke="#00e4e4" stroke-width="0.45"><tspan x="860.88" dy="-1" textLength="12.83" lengthAdjust="spacingAndGlyphs">-</tspan><tspan x="873.87" dy="1" letter-spacing="-0.541">93.20mV</tspan></text>
<text transform="translate(0,95) scale(1.07,1)" fill="#00e4e4" font-size="15" stroke="#00e4e4" stroke-width="0.45"><tspan x="860.58" dy="0" textLength="12.48" lengthAdjust="spacingAndGlyphs">Δ</tspan><tspan x="874.80" dy="0" letter-spacing="-0.230">95.60mV</tspan></text>
<circle cx="897" cy="52" r="8" fill="#ff4500"/>
<text x="897" y="56.3" fill="#000" font-size="14.5" text-anchor="middle" stroke="#000" stroke-width="0.7" >a</text>
<circle cx="897" cy="71" r="8" fill="#ff4500"/>
<text x="897" y="76" fill="#000" font-size="14.5" text-anchor="middle" stroke="#000" stroke-width="0.7" >b</text>
<rect x="20.5" y="652.5" width="554" height="20" rx="5" fill="#000400" stroke="#eeeef6"/>
<rect x="26" y="655" width="26" height="16" rx="8.0" fill="#fcfc00"/>
<text x="39.0" y="668" fill="#000" font-size="15" text-anchor="middle" stroke="#000" stroke-width="0.5" >1</text>
<text transform="translate(68.12,668) scale(1.07,1)" fill="#fcfc00" font-size="15" letter-spacing="-0.206" stroke="#fcfc00" stroke-width="0.45">2.00 V</text>
<text x="143.5" y="664" fill="#fcfc00" font-size="8.5" stroke="#fcfc00" stroke-width="0.2" >B</text>
<text x="147.0" y="668" fill="#fcfc00" font-size="8.5" stroke="#fcfc00" stroke-width="0.2" >W</text>
<rect x="165" y="655" width="26" height="16" rx="8.0" fill="#00e4e4"/>
<text x="178.0" y="668" fill="#000" font-size="15" text-anchor="middle" stroke="#000" stroke-width="0.5" >2</text>
<text transform="translate(207.12,668) scale(1.07,1)" fill="#00e4e4" font-size="15" letter-spacing="-0.484" stroke="#00e4e4" stroke-width="0.45">20.0mV</text>
<text x="282.5" y="664" fill="#00e4e4" font-size="8.5" stroke="#00e4e4" stroke-width="0.2" >B</text>
<text x="286.0" y="668" fill="#00e4e4" font-size="8.5" stroke="#00e4e4" stroke-width="0.2" >W</text>
<rect x="20.5" y="674.5" width="554" height="38" rx="5" fill="#000400" stroke="#eeeef6"/>
<text transform="translate(158.19,690) scale(1.07,1)" fill="#fff" font-size="15" letter-spacing="-0.168" stroke="#fff" stroke-width="0.45">Value</text>
<text transform="translate(245.70,690) scale(1.07,1)" fill="#fff" font-size="15" letter-spacing="-0.114" stroke="#fff" stroke-width="0.45">Mean</text>
<text transform="translate(328.69,690) scale(1.07,1)" fill="#fff" font-size="15" letter-spacing="1.371" stroke="#fff" stroke-width="0.45">Min</text>
<text transform="translate(410.69,690) scale(1.07,1)" fill="#fff" font-size="15" letter-spacing="-0.712" stroke="#fff" stroke-width="0.45">Max</text>
<text transform="translate(492.23,690) scale(1.07,1)" fill="#fff" font-size="15" letter-spacing="-0.242" stroke="#fff" stroke-width="0.45">Std Dev</text>
<rect x="26" y="695" width="26" height="16" rx="8.0" fill="#fcfc00"/>
<text x="39.0" y="708" fill="#000" font-size="15" text-anchor="middle" stroke="#000" stroke-width="0.5" >1</text>
<text transform="translate(55.70,708) scale(1.07,1)" fill="#fcfc00" font-size="15" letter-spacing="0.072" stroke="#fcfc00" stroke-width="0.45">Frequency</text>
<text transform="translate(0,708) scale(1.07,1)" fill="#fcfc00" font-size="15" stroke="#fcfc00" stroke-width="0.45"><tspan x="146.20" dy="-1" textLength="43.11" lengthAdjust="spacingAndGlyphs">----</tspan><tspan x="188.12" dy="1" letter-spacing="0.882">.Hz</tspan></text>
<text transform="translate(245.70,708) scale(1.07,1)" fill="#fff" font-size="15" letter-spacing="0.284" stroke="#fff" stroke-width="0.45">No period found</text>
<rect x="583.5" y="670.5" width="146" height="37" rx="5" fill="#000400" stroke="#eeeef6"/>
<text transform="translate(588.59,686) scale(1.07,1)" fill="#fff" font-size="15" letter-spacing="0.114" stroke="#fff" stroke-width="0.45">1.00μs</text>
<rect x="587" y="691" width="12" height="13" rx="2" fill="#ffa200"/>
<text x="593" y="702.6" fill="#000" font-size="12.5" text-anchor="middle" font-weight="bold" >T</text>
<path d="M600 697.5H609M605.5 694L609 697.5L605.5 701" fill="none" stroke="#ffa200" stroke-width="1.5"/>
<path d="M610.5 694H621.5L616 700.5Z" fill="#ffa200"/>
<text transform="translate(622.59,703) scale(1.07,1)" fill="#ffa200" font-size="15" letter-spacing="-0.116" stroke="#ffa200" stroke-width="0.45">120.000ns</text>
<rect x="737.5" y="670.5" width="106" height="37" rx="5" fill="#000400" stroke="#eeeef6"/>
<text transform="translate(743.12,686) scale(1.07,1)" fill="#fff" font-size="15" letter-spacing="0.028" stroke="#fff" stroke-width="0.45">2.50GS/s</text>
<text transform="translate(743.59,703) scale(1.07,1)" fill="#fff" font-size="15" letter-spacing="0.284" stroke="#fff" stroke-width="0.45">1M points</text>
<rect x="851.5" y="670.5" width="170" height="37" rx="5" fill="#000400" stroke="#eeeef6"/>
<rect x="882" y="673" width="26" height="16" rx="8.0" fill="#fcfc00"/>
<text x="895.0" y="686" fill="#000" font-size="15" text-anchor="middle" stroke="#000" stroke-width="0.5" >1</text>
<path d="M920 685.2H924.5L928 676.2H932.5" fill="none" stroke="#fff" stroke-width="1.7"/>
<text transform="translate(965.12,686) scale(1.07,1)" fill="#fff" font-size="15" letter-spacing="-0.206" stroke="#fff" stroke-width="0.45">3.96 V</text>
<rect x="909.5" y="729.5" width="112" height="36" rx="5" fill="#000400" stroke="#eeeef6"/>
<text transform="translate(915.59,746) scale(1.07,1)" fill="#fff" font-size="15" letter-spacing="-0.453" stroke="#fff" stroke-width="0.45">14 Dec</text>
<text transform="translate(978.12,746) scale(1.07,1)" fill="#fff" font-size="15" letter-spacing="-0.349" stroke="#fff" stroke-width="0.45">2020</text>
<text transform="translate(915.59,762) scale(1.07,1)" fill="#fff" font-size="15" letter-spacing="-0.039" stroke="#fff" stroke-width="0.45">13:50:12</text>
<path d="M21 770V721Q21 715 27 715H129Q134 715 134 721V770Z" fill="#1c2250"/>
<path d="M20 770V720Q20 714 26 714H127Q133 714 133 720V770Z" fill="#5588e2"/>
<path d="M20.5 770V720Q20.5 714.5 26 714.5H127" fill="none" stroke="#98c4ff"/>
<path d="M139 770V721Q139 715 145 715H247Q252 715 252 721V770Z" fill="#1c2250"/>
<path d="M138 770V720Q138 714 144 714H245Q251 714 251 720V770Z" fill="#5588e2"/>
<path d="M138.5 770V720Q138.5 714.5 144 714.5H245" fill="none" stroke="#98c4ff"/>
<path d="M257 770V721Q257 715 263 715H365Q370 715 370 721V770Z" fill="#1c2250"/>
<path d="M256 770V720Q256 714 262 714H363Q369 714 369 720V770Z" fill="#5588e2"/>
<path d="M256.5 770V720Q256.5 714.5 262 714.5H363" fill="none" stroke="#98c4ff"/>
<rect x="375.5" y="715.5" width="113" height="52" rx="6" fill="#1c2250"/>
<rect x="374" y="714" width="113" height="52" rx="6" fill="#5588e2"/>
<path d="M374.5 760V720Q374.5 714.5 380 714.5H481" fill="none" stroke="#98c4ff"/>
<rect x="493.5" y="715.5" width="113" height="52" rx="6" fill="#1c2250"/>
<rect x="492" y="714" width="113" height="52" rx="6" fill="#5588e2"/>
<path d="M492.5 760V720Q492.5 714.5 498 714.5H599" fill="none" stroke="#98c4ff"/>
<rect x="729.5" y="715.5" width="113" height="52" rx="6" fill="#1c2250"/>
<rect x="728" y="714" width="113" height="52" rx="6" fill="#5588e2"/>
<path d="M728.5 760V720Q728.5 714.5 734 714.5H835" fill="none" stroke="#98c4ff"/>
<path d="M0 715H12Q18 715 18 721V770H0Z" fill="#34408a"/>
<path d="M0 714H11Q17 714 17 720V761Q17 767 11 767H0Z" fill="#00e4e4"/>
<text transform="translate(4.12,748) scale(1.07,1)" fill="#000" font-size="15" letter-spacing="0.000" stroke="#000" stroke-width="0.45">2</text>
<text transform="translate(41.44,733) scale(1.07,1)" fill="#000" font-size="15" letter-spacing="0.404" stroke="#000" stroke-width="0.45">Coupling</text>
<rect x="33" y="742" width="30" height="26" rx="5" fill="#c6caec"/>
<text transform="translate(37.70,760) scale(1.07,1)" fill="#000" font-size="15" letter-spacing="-0.735" stroke="#000" stroke-width="0.45">DC</text>
<text transform="translate(95.19,760) scale(1.07,1)" fill="#000" font-size="15" letter-spacing="0.400" stroke="#000" stroke-width="0.45">AC</text>
<text transform="translate(147.30,733) scale(1.07,1)" fill="#000" font-size="15" letter-spacing="0.349" stroke="#000" stroke-width="0.45">Termination</text>
<rect x="143" y="742" width="48" height="26" rx="5" fill="#c6caec"/>
<text transform="translate(148.59,760) scale(1.07,1)" fill="#000" font-size="15" letter-spacing="0.642" stroke="#000" stroke-width="0.45">1MΩ</text>
<text transform="translate(207.02,760) scale(1.07,1)" fill="#000" font-size="15" letter-spacing="0.273" stroke="#000" stroke-width="0.45">50Ω</text>
<text transform="translate(287.69,733) scale(1.07,1)" fill="#000" font-size="15" letter-spacing="0.607" stroke="#000" stroke-width="0.45">Invert</text>
<text transform="translate(272.44,760) scale(1.07,1)" fill="#000" font-size="15" letter-spacing="1.735" stroke="#000" stroke-width="0.45">On</text>
<rect x="325" y="742" width="34" height="26" rx="5" fill="#c6caec"/>
<text transform="translate(329.44,760) scale(1.07,1)" fill="#000" font-size="15" letter-spacing="0.602" stroke="#000" stroke-width="0.45">Off</text>
<text transform="translate(387.69,738) scale(1.07,1)" fill="#000" font-size="15" letter-spacing="0.339" stroke="#000" stroke-width="0.45">Bandwidth</text>
<rect x="403" y="742" width="57" height="16" fill="#c6caec" />
<text transform="translate(404.12,755) scale(1.07,1)" fill="#000" font-size="15" letter-spacing="0.127" stroke="#000" stroke-width="0.45">20MHz</text>
<rect x="514" y="733" width="26" height="16" rx="8.0" fill="#00e4e4"/>
<text x="527.0" y="746" fill="#000" font-size="15" text-anchor="middle" stroke="#000" stroke-width="0.5" >2</text>
<text transform="translate(545.69,746) scale(1.07,1)" fill="#000" font-size="15" letter-spacing="-0.428" stroke="#000" stroke-width="0.45">Label</text>
<path d="M774 738L785 727L796 738Z" fill="#dfe5f8"/>
<path d="M774 738L778 735.5H792L796 738Z" fill="#8c8890"/>
<text transform="translate(765.69,753) scale(1.07,1)" fill="#000" font-size="15" letter-spacing="0.329" stroke="#000" stroke-width="0.45">More</text>
<text x="0" y="14.5" fill="#000" font-size="21" font-weight="bold" font-family='"Liberation Serif","DejaVu Serif",serif' stroke="#000" stroke-width="0.6" textLength="32" lengthAdjust="spacingAndGlyphs">Tek</text>
<text transform="translate(34.70,13) scale(1.07,1)" fill="#fff" font-size="15" letter-spacing="0.738" stroke="#fff" stroke-width="0.45">Run</text>
<text transform="translate(925.30,13) scale(1.07,1)" fill="#fff" font-size="15" letter-spacing="0.781" stroke="#fff" stroke-width="0.45">Trig?</text>
</svg>
</body></html>
